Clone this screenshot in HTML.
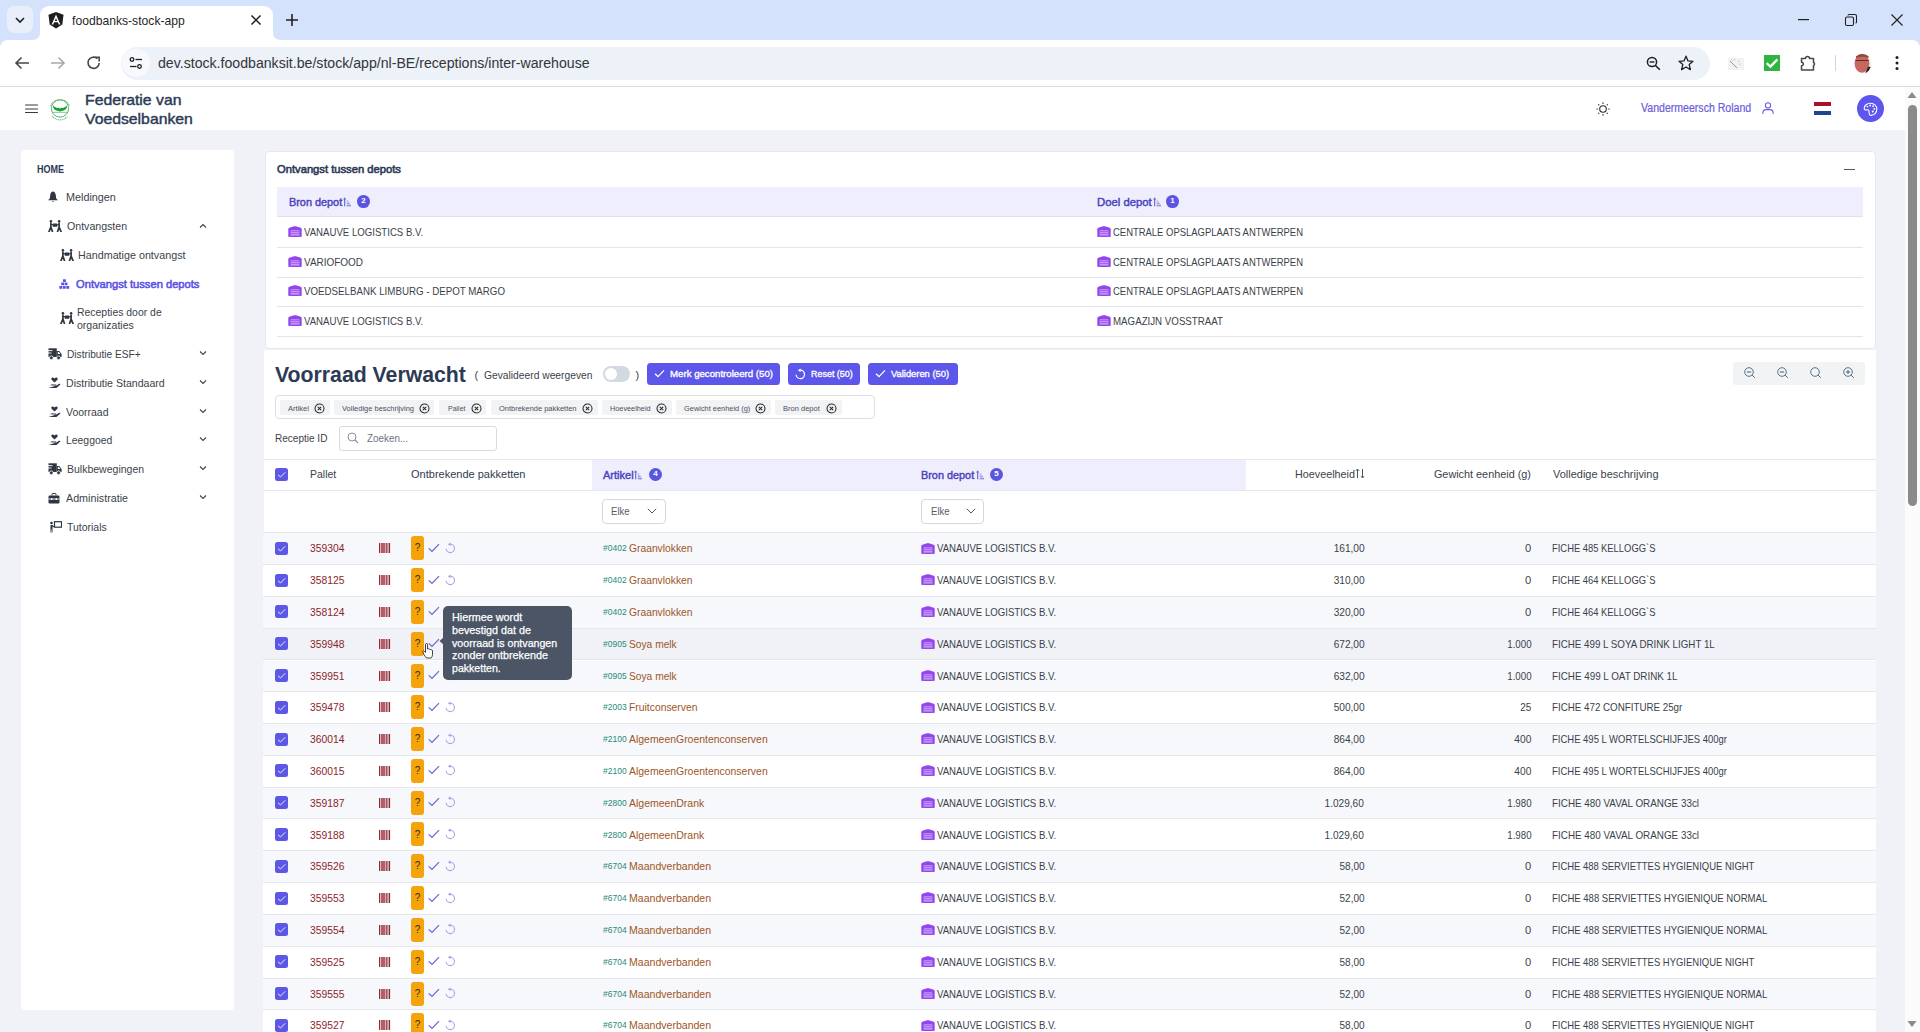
<!DOCTYPE html><html><head><meta charset="utf-8"><style>
*{box-sizing:border-box;margin:0;padding:0}
html,body{width:1920px;height:1032px;overflow:hidden;background:#f1f2f7;font-family:"Liberation Sans",sans-serif;color:#3b3f4a}
.a{position:absolute;white-space:nowrap}
svg{display:block}
</style></head><body><div class="a" style="left:0px;top:0px;width:1920px;height:48px;background:#d5e2fb;"></div><div class="a" style="left:7px;top:6px;width:26px;height:27px;background:#e8effb;border-radius:7px;"></div><svg class="a" style="left:14px;top:15px" width="12" height="10" viewBox="0 0 12 10"><path d="M2 3 L6 7 L10 3" fill="none" stroke="#1f1f1f" stroke-width="1.6"/></svg><div class="a" style="left:40px;top:6px;width:233px;height:40px;background:#fff;border-radius:9px 9px 0 0;"></div><svg class="a" style="left:32px;top:32px" width="8" height="8"><path d="M0 8 Q8 8 8 0 L8 8Z" fill="#fff"/></svg><svg class="a" style="left:273px;top:32px" width="8" height="8"><path d="M8 8 Q0 8 0 0 L0 8Z" fill="#fff"/></svg><svg class="a" style="left:48px;top:12px" width="16" height="17" viewBox="0 0 16 17"><path d="M8 0 L15.5 2.7 L14.3 12.6 L8 16.5 L1.7 12.6 L0.5 2.7Z" fill="#1f1f1f"/><path d="M8 2.6 L3.6 12.4 H5.2 L6.1 10.2 H9.9 L10.8 12.4 H12.4Z M8 6.2 L9.3 9 H6.7Z" fill="#fff"/></svg><div class="a" style="left:72.2px;top:13.20px;height:16px;line-height:16px;font-size:13px;color:#1f1f1f;font-weight:400;transform:scaleX(0.9347);transform-origin:left center;">foodbanks-stock-app</div><svg class="a" style="left:250px;top:14px" width="12" height="12" viewBox="0 0 12 12"><path d="M1.5 1.5 L10.5 10.5 M10.5 1.5 L1.5 10.5" stroke="#1f1f1f" stroke-width="1.5"/></svg><svg class="a" style="left:285px;top:13px" width="14" height="14" viewBox="0 0 14 14"><path d="M7 1 V13 M1 7 H13" stroke="#1f1f1f" stroke-width="1.6"/></svg><svg class="a" style="left:1798px;top:19px" width="12" height="2"><rect width="11" height="1.2" fill="#1f1f1f"/></svg><svg class="a" style="left:1844px;top:13px" width="14" height="14" viewBox="0 0 14 14"><rect x="1.5" y="4" width="8" height="8.5" rx="1.5" fill="none" stroke="#1f1f1f" stroke-width="1.1"/><path d="M4 2.5 Q4 1.5 5 1.5 H11 Q12.5 1.5 12.5 3 V9 Q12.5 10 11.5 10" fill="none" stroke="#1f1f1f" stroke-width="1.1"/></svg><svg class="a" style="left:1890px;top:13px" width="14" height="14" viewBox="0 0 14 14"><path d="M1.5 1.5 L12.5 12.5 M12.5 1.5 L1.5 12.5" stroke="#1f1f1f" stroke-width="1.1"/></svg><div class="a" style="left:0px;top:40px;width:1920px;height:46px;background:#fff;border-radius:8px 8px 0 0;"></div><div class="a" style="left:0px;top:86px;width:1920px;height:1px;background:#dadce0;"></div><svg class="a" style="left:14px;top:56px" width="16" height="14" viewBox="0 0 16 14"><path d="M15 7 H2 M7.5 1.5 L2 7 L7.5 12.5" fill="none" stroke="#474747" stroke-width="1.6"/></svg><svg class="a" style="left:50px;top:56px" width="16" height="14" viewBox="0 0 16 14"><path d="M1 7 H14 M8.5 1.5 L14 7 L8.5 12.5" fill="none" stroke="#a8a8a8" stroke-width="1.6"/></svg><svg class="a" style="left:86px;top:55px" width="16" height="16" viewBox="0 0 16 16"><path d="M13.2 8 A5.6 5.6 0 1 1 11.4 3.6" fill="none" stroke="#474747" stroke-width="1.6"/><path d="M9 2.2 H13.2 V6.4" fill="none" stroke="#474747" stroke-width="1.6"/></svg><div class="a" style="left:120.5px;top:46.5px;width:1589px;height:33px;background:#edf1f8;border-radius:16.5px;"></div><div class="a" style="left:122px;top:49px;width:28px;height:28px;background:#f8f9fc;border-radius:14px;"></div><svg class="a" style="left:129px;top:56px" width="14" height="14" viewBox="0 0 14 14"><circle cx="3" cy="3.5" r="1.8" fill="none" stroke="#1f1f1f" stroke-width="1.3"/><path d="M6.5 3.5 H13" stroke="#1f1f1f" stroke-width="1.3"/><circle cx="10.5" cy="10.5" r="1.8" fill="none" stroke="#1f1f1f" stroke-width="1.3"/><path d="M1 10.5 H7.5" stroke="#1f1f1f" stroke-width="1.3"/></svg><div class="a" style="left:157.8px;top:54.00px;height:18px;line-height:18px;font-size:14px;color:#333639;font-weight:400;transform:scaleX(1.0090);transform-origin:left center;">dev.stock.foodbanksit.be/stock/app/nl-BE/receptions/inter-warehouse</div><svg class="a" style="left:1646px;top:56px" width="15" height="15" viewBox="0 0 15 15"><circle cx="6" cy="6" r="4.6" fill="none" stroke="#1f1f1f" stroke-width="1.5"/><path d="M9.5 9.5 L13.8 13.8" stroke="#1f1f1f" stroke-width="1.6"/><path d="M3.6 6 H8.4" stroke="#1f1f1f" stroke-width="1.4"/></svg><svg class="a" style="left:1678px;top:55px" width="16" height="16" viewBox="0 0 16 16"><path d="M8 1.2 L10 5.9 L15 6.3 L11.2 9.6 L12.4 14.6 L8 12 L3.6 14.6 L4.8 9.6 L1 6.3 L6 5.9Z" fill="none" stroke="#1f1f1f" stroke-width="1.3" stroke-linejoin="round"/></svg><div class="a" style="left:1728px;top:57.5px;width:16px;height:12px;background:#f1f2f4;"></div><svg class="a" style="left:1728px;top:57px" width="16" height="13" viewBox="0 0 16 13"><path d="M2 4 L9 11" stroke="#8a8a8a" stroke-width="0.9"/><path d="M3 2 L5 4 M7 1.5 L6.5 3.5 M12 3 L10 5 M13 7 L11 7" stroke="#c4c4c4" stroke-width="0.8"/></svg><div class="a" style="left:1764px;top:55px;width:16px;height:16px;background:#2fb53f;"></div><svg class="a" style="left:1764px;top:55px" width="16" height="16" viewBox="0 0 16 16"><path d="M2.6 8.2 L6.4 11.6 L13.4 4.4" fill="none" stroke="#fff" stroke-width="2.3"/></svg><svg class="a" style="left:1800px;top:53.5px" width="18" height="18" viewBox="0 0 18 18"><path d="M1.5 4.5 H5.5 A2 2 0 0 1 9.5 4.5 H13.5 V8.5 A1.6 1.6 0 0 1 13.5 11.5 V16 H1.5 V11.8 A1.8 1.8 0 0 0 1.5 8.2Z" fill="none" stroke="#474747" stroke-width="1.5" stroke-linejoin="round"/></svg><div class="a" style="left:1834.5px;top:55px;width:1.2px;height:15.5px;background:#c8d7f5;"></div><svg class="a" style="left:1853px;top:52.5px" width="19" height="21" viewBox="0 0 19 21"><defs><clipPath id="av"><ellipse cx="9.5" cy="10.5" rx="8.8" ry="10.2"/></clipPath></defs><g clip-path="url(#av)"><rect width="19" height="21" fill="#f4f0ee"/><ellipse cx="9" cy="10.5" rx="7.4" ry="9.2" fill="#c8675f"/><path d="M15 14 Q17 13 19 15 V21 H12Z" fill="#222"/><path d="M2.5 7.5 H15.5" stroke="#5a2a25" stroke-width="1"/><path d="M3 3 Q9 -1 15.5 3 L15.5 5 Q9 2.5 3 5Z" fill="#8a4a40"/></g></svg><svg class="a" style="left:1894px;top:55px" width="6" height="16" viewBox="0 0 6 16"><circle cx="3" cy="2.5" r="1.5" fill="#1f1f1f"/><circle cx="3" cy="8" r="1.5" fill="#1f1f1f"/><circle cx="3" cy="13.5" r="1.5" fill="#1f1f1f"/></svg><div class="a" style="left:0px;top:87px;width:1905px;height:43px;background:#fff;"></div><div class="a" style="left:0px;top:130px;width:1905px;height:902px;background:#f1f2f7;"></div><svg class="a" style="left:25px;top:103.5px" width="13" height="10" viewBox="0 0 13 10"><path d="M0.5 1 H12.5 M0.5 5 H12.5 M0.5 8.5 H12.5" stroke="#353b48" stroke-width="1.05" stroke-linecap="round"/></svg><svg class="a" style="left:46px;top:95px" width="28" height="28" viewBox="0 0 28 28"><path d="M4.5 11 A10.2 10.2 0 0 1 23.5 11" fill="none" stroke="#5fae74" stroke-width="1.1" stroke-dasharray="1.2 0.6" opacity="0.8"/><path d="M6 21 A10.2 10.2 0 0 0 22 21" fill="none" stroke="#5fae74" stroke-width="1.1" stroke-dasharray="1.2 0.6" opacity="0.8"/><circle cx="14" cy="13.5" r="8.6" fill="none" stroke="#3fae5c" stroke-width="0.9"/><path d="M7.3 10.3 Q8 12.2 10.5 12.8 Q12.5 13.4 13.2 12.6 L14 14.2 L14.8 12.6 Q15.5 13.4 17.5 12.8 Q20 12.2 20.7 10.3 L20.8 12.5 Q20 15 17.5 15.4 L14 16.6 L10.5 15.4 Q8 15 7.2 12.5Z" fill="#16a032"/><path d="M7 17.3 H21" stroke="#6fb083" stroke-width="0.8"/></svg><div class="a" style="left:84.5px;top:90.60px;height:18px;line-height:18px;font-size:14.5px;color:#2c3a55;font-weight:400;transform:scaleX(1.0877);transform-origin:left center;-webkit-text-stroke:0.42px #2c3a55;">Federatie van</div><div class="a" style="left:85px;top:109.50px;height:18px;line-height:18px;font-size:14.5px;color:#2c3a55;font-weight:400;transform:scaleX(1.0874);transform-origin:left center;-webkit-text-stroke:0.42px #2c3a55;">Voedselbanken</div><svg class="a" style="left:1595.5px;top:101.5px" width="14" height="14" viewBox="0 0 14 14"><circle cx="7" cy="7" r="3.3" fill="none" stroke="#2d2d2d" stroke-width="1.1"/><g stroke="#2d2d2d" stroke-width="1.1" stroke-linecap="round"><path d="M7 0.8 V1.4"/><path d="M7 12.6 V13.2"/><path d="M0.8 7 H1.4"/><path d="M12.6 7 H13.2"/><path d="M2.6 2.6 L2.9 2.9"/><path d="M11.1 11.1 L11.4 11.4"/><path d="M11.4 2.6 L11.1 2.9"/><path d="M2.9 11.1 L2.6 11.4"/></g></svg><div class="a" style="left:1641.3px;top:100.50px;height:15px;line-height:15px;font-size:12px;color:#6a5dd9;font-weight:400;transform:scaleX(0.8805);transform-origin:left center;-webkit-text-stroke:0.2px #6a5dd9;">Vandermeersch Roland</div><svg class="a" style="left:1762px;top:101.5px" width="12" height="12" viewBox="0 0 12 12"><circle cx="6" cy="3.4" r="2.6" fill="none" stroke="#6b5fdc" stroke-width="1.1"/><path d="M0.8 11.4 Q0.8 7.6 4 7.6 H8 Q11.2 7.6 11.2 11.4" fill="none" stroke="#6b5fdc" stroke-width="1.1" stroke-linecap="round"/></svg><div class="a" style="left:1814px;top:102px;width:17px;height:4px;background:#a8102c;"></div><div class="a" style="left:1814px;top:106px;width:17px;height:4.6px;background:#fff;"></div><div class="a" style="left:1814px;top:110.6px;width:17px;height:4.2px;background:#21468b;"></div><div class="a" style="left:1857px;top:95px;width:27px;height:27px;background:#5d55ee;border-radius:50%;"></div><svg class="a" style="left:1863px;top:101.5px" width="15" height="15" viewBox="0 0 15 15"><path d="M7.5 1.2 C4 1.2 1.2 3.6 1.2 6.4 C1.2 7.8 2.4 8.2 3.4 7.9 C4.8 7.5 6 8.2 6 9.6 C6 10.4 6 11 6.3 11.8 C6.6 13 7.3 13.6 8 13.4 C11.5 12.8 13.8 10.3 13.8 7 C13.8 3.8 11 1.2 7.5 1.2Z" fill="none" stroke="#fff" stroke-width="1.1"/><circle cx="4.4" cy="4.6" r="0.9" fill="#fff"/><circle cx="7.2" cy="3.5" r="0.9" fill="#fff"/><circle cx="10" cy="4.2" r="0.9" fill="#fff"/><circle cx="11.3" cy="6.9" r="0.9" fill="#fff"/><circle cx="9.8" cy="9.6" r="1" fill="#fff"/></svg><div class="a" style="left:1905px;top:87px;width:15px;height:945px;background:#fbfbfb;"></div><svg class="a" style="left:1907px;top:91px" width="10" height="8"><path d="M5 1 L9.5 7 H0.5Z" fill="#8a8a8a"/></svg><div class="a" style="left:1908px;top:105px;width:9px;height:401px;background:#8a8a8a;border-radius:5px;"></div><svg class="a" style="left:1907px;top:1020px" width="10" height="8"><path d="M5 7 L9.5 1 H0.5Z" fill="#8a8a8a"/></svg><div class="a" style="left:21px;top:150px;width:213px;height:860px;background:#fff;border-radius:4px;"></div><div class="a" style="left:37.4px;top:163.50px;height:12px;line-height:12px;font-size:10px;color:#2c3a55;font-weight:700;transform:scaleX(0.9033);transform-origin:left center;">HOME</div><div class="a" style="left:47px;top:191.0px"><svg width="12" height="12" viewBox="0 0 12 12"><path d="M6 0.6 C4.6 0.6 3.4 2.2 3.2 4.2 L2.8 7.4 L1 9.2 H11 L9.2 7.4 L8.8 4.2 C8.6 2.2 7.4 0.6 6 0.6Z" fill="#2f3542"/><path d="M4.8 10 Q6 11.6 7.2 10Z" fill="#2f3542"/></svg></div><div class="a" style="left:65.5px;top:190.20px;height:14px;line-height:14px;font-size:11px;color:#3b3f4a;font-weight:400;transform:scaleX(0.9811);transform-origin:left center;">Meldingen</div><div class="a" style="left:48px;top:219.8px"><svg width="14" height="12" viewBox="0 0 14 12"><circle cx="2.9" cy="1.3" r="1.25" fill="#2f3542"/><circle cx="11.1" cy="1.3" r="1.25" fill="#2f3542"/><path d="M2.9 3 V7.2 M2.9 7 L1 11.6 M2.9 7 L4.4 11.6 M11.1 3 V7.2 M11.1 7 L13 11.6 M11.1 7 L9.6 11.6" stroke="#2f3542" stroke-width="1.7" fill="none" stroke-linecap="round"/><path d="M3 4.2 L5 5 M11 4.2 L9 5" stroke="#2f3542" stroke-width="1.2"/><rect x="4.7" y="3.6" width="4.6" height="3.2" rx="0.6" fill="#2f3542"/></svg></div><div class="a" style="left:66.9px;top:219.20px;height:14px;line-height:14px;font-size:11px;color:#3b3f4a;font-weight:400;transform:scaleX(0.9635);transform-origin:left center;">Ontvangsten</div><svg class="a" style="left:198.8px;top:223px" width="8" height="6" viewBox="0 0 8 6"><path d="M1 4.5 L4 1.5 L7 4.5" fill="none" stroke="#3d4450" stroke-width="1.1"/></svg><div class="a" style="left:60px;top:249.0px"><svg width="14" height="12" viewBox="0 0 14 12"><circle cx="2.9" cy="1.3" r="1.25" fill="#2f3542"/><circle cx="11.1" cy="1.3" r="1.25" fill="#2f3542"/><path d="M2.9 3 V7.2 M2.9 7 L1 11.6 M2.9 7 L4.4 11.6 M11.1 3 V7.2 M11.1 7 L13 11.6 M11.1 7 L9.6 11.6" stroke="#2f3542" stroke-width="1.7" fill="none" stroke-linecap="round"/><path d="M3 4.2 L5 5 M11 4.2 L9 5" stroke="#2f3542" stroke-width="1.2"/><rect x="4.7" y="3.6" width="4.6" height="3.2" rx="0.6" fill="#2f3542"/></svg></div><div class="a" style="left:77.5px;top:248.30px;height:14px;line-height:14px;font-size:11px;color:#3b3f4a;font-weight:400;transform:scaleX(0.9766);transform-origin:left center;">Handmatige ontvangst</div><div class="a" style="left:58.8px;top:278.5px"><svg width="11" height="11" viewBox="0 0 11 11"><g fill="#5a52e5"><rect x="4" y="0.2" width="2.9" height="2.8" rx="0.4"/><rect x="2.2" y="3.4" width="2.9" height="2.8" rx="0.4"/><rect x="5.6" y="3.4" width="2.9" height="2.8" rx="0.4"/><rect x="0.3" y="6.9" width="2.9" height="2.9" rx="0.4"/><rect x="3.8" y="6.9" width="2.9" height="2.9" rx="0.4"/><rect x="7.3" y="6.9" width="2.9" height="2.9" rx="0.4"/></g></svg></div><div class="a" style="left:76px;top:277.40px;height:14px;line-height:14px;font-size:11px;color:#5a52e5;font-weight:400;transform:scaleX(1.0144);transform-origin:left center;-webkit-text-stroke:0.55px #5a52e5;">Ontvangst tussen depots</div><div class="a" style="left:60px;top:312.0px"><svg width="14" height="12" viewBox="0 0 14 12"><circle cx="2.9" cy="1.3" r="1.25" fill="#2f3542"/><circle cx="11.1" cy="1.3" r="1.25" fill="#2f3542"/><path d="M2.9 3 V7.2 M2.9 7 L1 11.6 M2.9 7 L4.4 11.6 M11.1 3 V7.2 M11.1 7 L13 11.6 M11.1 7 L9.6 11.6" stroke="#2f3542" stroke-width="1.7" fill="none" stroke-linecap="round"/><path d="M3 4.2 L5 5 M11 4.2 L9 5" stroke="#2f3542" stroke-width="1.2"/><rect x="4.7" y="3.6" width="4.6" height="3.2" rx="0.6" fill="#2f3542"/></svg></div><div class="a" style="left:76.5px;top:305.10px;height:14px;line-height:14px;font-size:11px;color:#3b3f4a;font-weight:400;transform:scaleX(0.9487);transform-origin:left center;">Recepties door de</div><div class="a" style="left:76.5px;top:318.00px;height:14px;line-height:14px;font-size:11px;color:#3b3f4a;font-weight:400;transform:scaleX(0.9576);transform-origin:left center;">organizaties</div><div class="a" style="left:47.8px;top:347.5px"><svg width="14" height="12" viewBox="0 0 14 12"><path d="M0.5 0.3 H8.8 V9 H0.5Z" fill="#2f3542"/><path d="M8.8 3 H11.3 L13.6 6 V9 H8.8Z" fill="#2f3542"/><path d="M9.8 4 H11 L12.4 6 H9.8Z" fill="#fff"/><circle cx="3.3" cy="9.8" r="1.9" fill="#2f3542" stroke="#fff" stroke-width="0.8"/><circle cx="10.6" cy="9.8" r="1.9" fill="#2f3542" stroke="#fff" stroke-width="0.8"/><path d="M0 2.6 H4.5 M0 5 H3.5" stroke="#fff" stroke-width="0.9"/></svg></div><div class="a" style="left:67.3px;top:346.80px;height:14px;line-height:14px;font-size:11px;color:#3b3f4a;font-weight:400;transform:scaleX(0.9238);transform-origin:left center;">Distributie ESF+</div><svg class="a" style="left:198.8px;top:350px" width="8" height="6" viewBox="0 0 8 6"><path d="M1 1.5 L4 4.5 L7 1.5" fill="none" stroke="#3d4450" stroke-width="1.1"/></svg><div class="a" style="left:48px;top:377.0px"><svg width="13" height="12" viewBox="0 0 13 12"><path d="M6.5 5.5 L3.8 3 Q2.8 1.8 3.8 0.8 Q5 -0.2 6.5 1.5 Q8 -0.2 9.2 0.8 Q10.2 1.8 9.2 3Z" fill="#2f3542"/><path d="M0.5 8 H2.5 Q4 7 5.5 7.5 H8 Q8.8 7.8 8 8.6 H5.5 M8.5 8.4 L11 6.8 Q12.5 6.5 12.3 7.6 L9 10.5 Q8.5 11 7.5 11 H0.5Z" fill="#2f3542"/></svg></div><div class="a" style="left:65.5px;top:376.00px;height:14px;line-height:14px;font-size:11px;color:#3b3f4a;font-weight:400;transform:scaleX(0.9608);transform-origin:left center;">Distributie Standaard</div><svg class="a" style="left:198.8px;top:379px" width="8" height="6" viewBox="0 0 8 6"><path d="M1 1.5 L4 4.5 L7 1.5" fill="none" stroke="#3d4450" stroke-width="1.1"/></svg><div class="a" style="left:48px;top:406.0px"><svg width="13" height="12" viewBox="0 0 13 12"><path d="M6.5 5.5 L3.8 3 Q2.8 1.8 3.8 0.8 Q5 -0.2 6.5 1.5 Q8 -0.2 9.2 0.8 Q10.2 1.8 9.2 3Z" fill="#2f3542"/><path d="M0.5 8 H2.5 Q4 7 5.5 7.5 H8 Q8.8 7.8 8 8.6 H5.5 M8.5 8.4 L11 6.8 Q12.5 6.5 12.3 7.6 L9 10.5 Q8.5 11 7.5 11 H0.5Z" fill="#2f3542"/></svg></div><div class="a" style="left:65.5px;top:405.00px;height:14px;line-height:14px;font-size:11px;color:#3b3f4a;font-weight:400;transform:scaleX(0.9519);transform-origin:left center;">Voorraad</div><svg class="a" style="left:198.8px;top:408px" width="8" height="6" viewBox="0 0 8 6"><path d="M1 1.5 L4 4.5 L7 1.5" fill="none" stroke="#3d4450" stroke-width="1.1"/></svg><div class="a" style="left:48px;top:434.0px"><svg width="13" height="12" viewBox="0 0 13 12"><path d="M6.5 5.5 L3.8 3 Q2.8 1.8 3.8 0.8 Q5 -0.2 6.5 1.5 Q8 -0.2 9.2 0.8 Q10.2 1.8 9.2 3Z" fill="#2f3542"/><path d="M0.5 8 H2.5 Q4 7 5.5 7.5 H8 Q8.8 7.8 8 8.6 H5.5 M8.5 8.4 L11 6.8 Q12.5 6.5 12.3 7.6 L9 10.5 Q8.5 11 7.5 11 H0.5Z" fill="#2f3542"/></svg></div><div class="a" style="left:65.5px;top:433.30px;height:14px;line-height:14px;font-size:11px;color:#3b3f4a;font-weight:400;transform:scaleX(0.9460);transform-origin:left center;">Leeggoed</div><svg class="a" style="left:198.8px;top:436px" width="8" height="6" viewBox="0 0 8 6"><path d="M1 1.5 L4 4.5 L7 1.5" fill="none" stroke="#3d4450" stroke-width="1.1"/></svg><div class="a" style="left:47.8px;top:462.8px"><svg width="14" height="12" viewBox="0 0 14 12"><path d="M0.5 0.3 H8.8 V9 H0.5Z" fill="#2f3542"/><path d="M8.8 3 H11.3 L13.6 6 V9 H8.8Z" fill="#2f3542"/><path d="M9.8 4 H11 L12.4 6 H9.8Z" fill="#fff"/><circle cx="3.3" cy="9.8" r="1.9" fill="#2f3542" stroke="#fff" stroke-width="0.8"/><circle cx="10.6" cy="9.8" r="1.9" fill="#2f3542" stroke="#fff" stroke-width="0.8"/><path d="M0 2.6 H4.5 M0 5 H3.5" stroke="#fff" stroke-width="0.9"/></svg></div><div class="a" style="left:67.3px;top:462.30px;height:14px;line-height:14px;font-size:11px;color:#3b3f4a;font-weight:400;transform:scaleX(0.9550);transform-origin:left center;">Bulkbewegingen</div><svg class="a" style="left:198.8px;top:465px" width="8" height="6" viewBox="0 0 8 6"><path d="M1 1.5 L4 4.5 L7 1.5" fill="none" stroke="#3d4450" stroke-width="1.1"/></svg><div class="a" style="left:48px;top:492.5px"><svg width="12" height="11" viewBox="0 0 12 11"><path d="M4 2.5 V1.2 Q4 0.5 4.7 0.5 H7.3 Q8 0.5 8 1.2 V2.5" fill="none" stroke="#2f3542" stroke-width="1"/><rect x="0.5" y="2.5" width="11" height="8" rx="1.2" fill="#2f3542"/><path d="M0.5 6 H11.5" stroke="#fff" stroke-width="0.9"/><rect x="3" y="5.2" width="1.4" height="1.8" fill="#fff"/><rect x="7.6" y="5.2" width="1.4" height="1.8" fill="#fff"/></svg></div><div class="a" style="left:65.5px;top:490.80px;height:14px;line-height:14px;font-size:11px;color:#3b3f4a;font-weight:400;transform:scaleX(0.9751);transform-origin:left center;">Administratie</div><svg class="a" style="left:198.8px;top:494px" width="8" height="6" viewBox="0 0 8 6"><path d="M1 1.5 L4 4.5 L7 1.5" fill="none" stroke="#3d4450" stroke-width="1.1"/></svg><div class="a" style="left:49px;top:521.0px"><svg width="13" height="12" viewBox="0 0 13 12"><rect x="5.5" y="0.7" width="7" height="5.5" fill="none" stroke="#2f3542" stroke-width="1.2"/><circle cx="2.5" cy="2" r="1.3" fill="#2f3542"/><path d="M1.5 4 H3.5 L5.5 5.5 L4.8 6.3 L3.5 5.6 V11.5 H2.8 V8.5 H2.3 V11.5 H1.5Z" fill="#2f3542"/></svg></div><div class="a" style="left:67.3px;top:519.70px;height:14px;line-height:14px;font-size:11px;color:#3b3f4a;font-weight:400;transform:scaleX(0.9504);transform-origin:left center;">Tutorials</div><div class="a" style="left:264.5px;top:151px;width:1611.5px;height:198px;background:#fff;border:1px solid #e6e8ee;border-radius:4px;"></div><div class="a" style="left:277.4px;top:162.20px;height:14px;line-height:14px;font-size:11.5px;color:#2c3a55;font-weight:400;transform:scaleX(0.9740);transform-origin:left center;-webkit-text-stroke:0.6px #2c3a55;">Ontvangst tussen depots</div><div class="a" style="left:1843.5px;top:168.5px;width:11px;height:1.2px;background:#5a5a5a;"></div><div class="a" style="left:277px;top:187px;width:1586px;height:30px;background:#eeeefc;"></div><div class="a" style="left:277px;top:216px;width:1586px;height:1px;background:#e1e2ea;"></div><div class="a" style="left:288.6px;top:195.00px;height:14px;line-height:14px;font-size:11px;color:#4a3fc0;font-weight:400;transform:scaleX(0.9882);transform-origin:left center;-webkit-text-stroke:0.42px #4a3fc0;">Bron depot</div><svg class="a" style="left:343px;top:196.5px" width="9" height="10" viewBox="0 0 9 10"><rect x="1.05" y="1.6" width="1.2" height="7.7" fill="#6f6ad0"/><path d="M0 2.4 L1.65 0.3 L3.3 2.4Z" fill="#6f6ad0"/><rect x="3.7" y="3.4" width="1.6" height="1.4" fill="#aaa6df"/><rect x="3.7" y="5.5" width="2.9" height="1.5" fill="#a19dda"/><rect x="3.7" y="7.6" width="4.3" height="1.8" fill="#9894d6"/></svg><div class="a" style="left:357.20000000000005px;top:194.79999999999998px;width:12.8px;height:12.8px;border-radius:50%;background:#5b55e0;color:#fff;font-size:8px;font-weight:700;line-height:12.8px;text-align:center">2</div><div class="a" style="left:1097.2px;top:195.00px;height:14px;line-height:14px;font-size:11px;color:#4a3fc0;font-weight:400;transform:scaleX(1.0293);transform-origin:left center;-webkit-text-stroke:0.42px #4a3fc0;">Doel depot</div><svg class="a" style="left:1152.8px;top:196.5px" width="9" height="10" viewBox="0 0 9 10"><rect x="1.05" y="1.6" width="1.2" height="7.7" fill="#6f6ad0"/><path d="M0 2.4 L1.65 0.3 L3.3 2.4Z" fill="#6f6ad0"/><rect x="3.7" y="3.4" width="1.6" height="1.4" fill="#aaa6df"/><rect x="3.7" y="5.5" width="2.9" height="1.5" fill="#a19dda"/><rect x="3.7" y="7.6" width="4.3" height="1.8" fill="#9894d6"/></svg><div class="a" style="left:1166.1px;top:195.1px;width:12.8px;height:12.8px;border-radius:50%;background:#5b55e0;color:#fff;font-size:8px;font-weight:700;line-height:12.8px;text-align:center">1</div><div class="a" style="left:288px;top:226.0px"><svg width="14" height="11" viewBox="0 0 14 11"><path d="M0.3 3.2 Q0.3 2.2 1.3 1.8 L6 0.3 Q7 0 8 0.3 L12.7 1.8 Q13.7 2.2 13.7 3.2 V10.2 Q13.7 11 12.9 11 H1.1 Q0.3 11 0.3 10.2Z" fill="#9446ee"/><rect x="2.8" y="4.6" width="8.4" height="6.4" fill="#f1e8fd"/><rect x="2.8" y="5.2" width="8.4" height="1.3" fill="#9446ee"/><rect x="2.8" y="7.2" width="8.4" height="1.3" fill="#9446ee"/><rect x="2.8" y="9.3" width="8.4" height="1.7" fill="#9446ee"/></svg></div><div class="a" style="left:304px;top:225.00px;height:14px;line-height:14px;font-size:11px;color:#3b3f4a;font-weight:400;transform:scaleX(0.8747);transform-origin:left center;">VANAUVE LOGISTICS B.V.</div><div class="a" style="left:1097px;top:226.0px"><svg width="14" height="11" viewBox="0 0 14 11"><path d="M0.3 3.2 Q0.3 2.2 1.3 1.8 L6 0.3 Q7 0 8 0.3 L12.7 1.8 Q13.7 2.2 13.7 3.2 V10.2 Q13.7 11 12.9 11 H1.1 Q0.3 11 0.3 10.2Z" fill="#9446ee"/><rect x="2.8" y="4.6" width="8.4" height="6.4" fill="#f1e8fd"/><rect x="2.8" y="5.2" width="8.4" height="1.3" fill="#9446ee"/><rect x="2.8" y="7.2" width="8.4" height="1.3" fill="#9446ee"/><rect x="2.8" y="9.3" width="8.4" height="1.7" fill="#9446ee"/></svg></div><div class="a" style="left:1113.4px;top:225.00px;height:14px;line-height:14px;font-size:11px;color:#3b3f4a;font-weight:400;transform:scaleX(0.8594);transform-origin:left center;">CENTRALE OPSLAGPLAATS ANTWERPEN</div><div class="a" style="left:277px;top:247px;width:1586px;height:1px;background:#e4e5ea;"></div><div class="a" style="left:288px;top:255.67000000000002px"><svg width="14" height="11" viewBox="0 0 14 11"><path d="M0.3 3.2 Q0.3 2.2 1.3 1.8 L6 0.3 Q7 0 8 0.3 L12.7 1.8 Q13.7 2.2 13.7 3.2 V10.2 Q13.7 11 12.9 11 H1.1 Q0.3 11 0.3 10.2Z" fill="#9446ee"/><rect x="2.8" y="4.6" width="8.4" height="6.4" fill="#f1e8fd"/><rect x="2.8" y="5.2" width="8.4" height="1.3" fill="#9446ee"/><rect x="2.8" y="7.2" width="8.4" height="1.3" fill="#9446ee"/><rect x="2.8" y="9.3" width="8.4" height="1.7" fill="#9446ee"/></svg></div><div class="a" style="left:304px;top:254.67px;height:14px;line-height:14px;font-size:11px;color:#3b3f4a;font-weight:400;transform:scaleX(0.9051);transform-origin:left center;">VARIOFOOD</div><div class="a" style="left:1097px;top:255.67000000000002px"><svg width="14" height="11" viewBox="0 0 14 11"><path d="M0.3 3.2 Q0.3 2.2 1.3 1.8 L6 0.3 Q7 0 8 0.3 L12.7 1.8 Q13.7 2.2 13.7 3.2 V10.2 Q13.7 11 12.9 11 H1.1 Q0.3 11 0.3 10.2Z" fill="#9446ee"/><rect x="2.8" y="4.6" width="8.4" height="6.4" fill="#f1e8fd"/><rect x="2.8" y="5.2" width="8.4" height="1.3" fill="#9446ee"/><rect x="2.8" y="7.2" width="8.4" height="1.3" fill="#9446ee"/><rect x="2.8" y="9.3" width="8.4" height="1.7" fill="#9446ee"/></svg></div><div class="a" style="left:1113.4px;top:254.67px;height:14px;line-height:14px;font-size:11px;color:#3b3f4a;font-weight:400;transform:scaleX(0.8594);transform-origin:left center;">CENTRALE OPSLAGPLAATS ANTWERPEN</div><div class="a" style="left:277px;top:277px;width:1586px;height:1px;background:#e4e5ea;"></div><div class="a" style="left:288px;top:285.34000000000003px"><svg width="14" height="11" viewBox="0 0 14 11"><path d="M0.3 3.2 Q0.3 2.2 1.3 1.8 L6 0.3 Q7 0 8 0.3 L12.7 1.8 Q13.7 2.2 13.7 3.2 V10.2 Q13.7 11 12.9 11 H1.1 Q0.3 11 0.3 10.2Z" fill="#9446ee"/><rect x="2.8" y="4.6" width="8.4" height="6.4" fill="#f1e8fd"/><rect x="2.8" y="5.2" width="8.4" height="1.3" fill="#9446ee"/><rect x="2.8" y="7.2" width="8.4" height="1.3" fill="#9446ee"/><rect x="2.8" y="9.3" width="8.4" height="1.7" fill="#9446ee"/></svg></div><div class="a" style="left:304px;top:284.34px;height:14px;line-height:14px;font-size:11px;color:#3b3f4a;font-weight:400;transform:scaleX(0.8848);transform-origin:left center;">VOEDSELBANK LIMBURG - DEPOT MARGO</div><div class="a" style="left:1097px;top:285.34000000000003px"><svg width="14" height="11" viewBox="0 0 14 11"><path d="M0.3 3.2 Q0.3 2.2 1.3 1.8 L6 0.3 Q7 0 8 0.3 L12.7 1.8 Q13.7 2.2 13.7 3.2 V10.2 Q13.7 11 12.9 11 H1.1 Q0.3 11 0.3 10.2Z" fill="#9446ee"/><rect x="2.8" y="4.6" width="8.4" height="6.4" fill="#f1e8fd"/><rect x="2.8" y="5.2" width="8.4" height="1.3" fill="#9446ee"/><rect x="2.8" y="7.2" width="8.4" height="1.3" fill="#9446ee"/><rect x="2.8" y="9.3" width="8.4" height="1.7" fill="#9446ee"/></svg></div><div class="a" style="left:1113.4px;top:284.34px;height:14px;line-height:14px;font-size:11px;color:#3b3f4a;font-weight:400;transform:scaleX(0.8594);transform-origin:left center;">CENTRALE OPSLAGPLAATS ANTWERPEN</div><div class="a" style="left:277px;top:306px;width:1586px;height:1px;background:#e4e5ea;"></div><div class="a" style="left:288px;top:315.01px"><svg width="14" height="11" viewBox="0 0 14 11"><path d="M0.3 3.2 Q0.3 2.2 1.3 1.8 L6 0.3 Q7 0 8 0.3 L12.7 1.8 Q13.7 2.2 13.7 3.2 V10.2 Q13.7 11 12.9 11 H1.1 Q0.3 11 0.3 10.2Z" fill="#9446ee"/><rect x="2.8" y="4.6" width="8.4" height="6.4" fill="#f1e8fd"/><rect x="2.8" y="5.2" width="8.4" height="1.3" fill="#9446ee"/><rect x="2.8" y="7.2" width="8.4" height="1.3" fill="#9446ee"/><rect x="2.8" y="9.3" width="8.4" height="1.7" fill="#9446ee"/></svg></div><div class="a" style="left:304px;top:314.01px;height:14px;line-height:14px;font-size:11px;color:#3b3f4a;font-weight:400;transform:scaleX(0.8747);transform-origin:left center;">VANAUVE LOGISTICS B.V.</div><div class="a" style="left:1097px;top:315.01px"><svg width="14" height="11" viewBox="0 0 14 11"><path d="M0.3 3.2 Q0.3 2.2 1.3 1.8 L6 0.3 Q7 0 8 0.3 L12.7 1.8 Q13.7 2.2 13.7 3.2 V10.2 Q13.7 11 12.9 11 H1.1 Q0.3 11 0.3 10.2Z" fill="#9446ee"/><rect x="2.8" y="4.6" width="8.4" height="6.4" fill="#f1e8fd"/><rect x="2.8" y="5.2" width="8.4" height="1.3" fill="#9446ee"/><rect x="2.8" y="7.2" width="8.4" height="1.3" fill="#9446ee"/><rect x="2.8" y="9.3" width="8.4" height="1.7" fill="#9446ee"/></svg></div><div class="a" style="left:1113.4px;top:314.01px;height:14px;line-height:14px;font-size:11px;color:#3b3f4a;font-weight:400;transform:scaleX(0.8837);transform-origin:left center;">MAGAZIJN VOSSTRAAT</div><div class="a" style="left:277px;top:336px;width:1586px;height:1px;background:#e4e5ea;"></div><div class="a" style="left:264px;top:350px;width:1612px;height:682px;background:#fff;"></div><div class="a" style="left:275.2px;top:361.40px;height:28px;line-height:28px;font-size:22px;color:#2c3a55;font-weight:700;transform:scaleX(0.9657);transform-origin:left center;">Voorraad Verwacht</div><div class="a" style="left:474.5px;top:367.80px;height:14px;line-height:14px;font-size:11px;color:#3b3f4a;font-weight:400;">(</div><div class="a" style="left:483.5px;top:367.60px;height:14px;line-height:14px;font-size:11.3px;color:#3b3f4a;font-weight:400;transform:scaleX(0.9091);transform-origin:left center;">Gevalideerd weergeven</div><div class="a" style="left:603px;top:366px;width:27px;height:16px;background:#d3d9e2;border-radius:8px;"></div><div class="a" style="left:605px;top:368px;width:12px;height:12px;background:#fff;border-radius:50%;"></div><div class="a" style="left:635.5px;top:367.80px;height:14px;line-height:14px;font-size:11px;color:#3b3f4a;font-weight:400;">)</div><div class="a" style="left:647px;top:363px;width:133px;height:22px;background:#5d56ea;border-radius:3.5px;"></div><div class="a" style="left:654px;top:368px"><svg width="11" height="11" viewBox="0 0 11 11"><path d="M1 5.8 L4 8.6 L10 2.4" fill="none" stroke="#fff" stroke-width="1.3"/></svg></div><div class="a" style="left:669.6px;top:367.50px;height:12px;line-height:12px;font-size:9.8px;color:#fff;font-weight:400;transform:scaleX(0.9854);transform-origin:left center;-webkit-text-stroke:0.35px #fff;">Merk gecontroleerd (50)</div><div class="a" style="left:788px;top:363px;width:72px;height:22px;background:#5d56ea;border-radius:3.5px;"></div><div class="a" style="left:795px;top:368px"><svg width="11" height="12" viewBox="0 0 11 12"><path d="M5.2 2.2 A4.2 4.2 0 1 1 1.1 6.8" fill="none" stroke="#fff" stroke-width="1.3"/><path d="M2.8 2.2 L5.6 0.4 L5.6 4Z" fill="#fff"/></svg></div><div class="a" style="left:810.7px;top:367.50px;height:12px;line-height:12px;font-size:9.8px;color:#fff;font-weight:400;transform:scaleX(0.9132);transform-origin:left center;-webkit-text-stroke:0.35px #fff;">Reset (50)</div><div class="a" style="left:868px;top:363px;width:90px;height:22px;background:#5d56ea;border-radius:3.5px;"></div><div class="a" style="left:875px;top:368px"><svg width="11" height="11" viewBox="0 0 11 11"><path d="M1 5.8 L4 8.6 L10 2.4" fill="none" stroke="#fff" stroke-width="1.3"/></svg></div><div class="a" style="left:891.4px;top:367.50px;height:12px;line-height:12px;font-size:9.8px;color:#fff;font-weight:400;transform:scaleX(0.9545);transform-origin:left center;-webkit-text-stroke:0.35px #fff;">Valideren (50)</div><div class="a" style="left:1733px;top:362px;width:132px;height:23px;background:#f1f3f5;border-radius:3px;"></div><svg class="a" style="left:1743px;top:366.4px" width="13" height="13" viewBox="0 0 13 13"><circle cx="6" cy="6" r="4.3" fill="none" stroke="#526a82" stroke-width="0.95"/><path d="M9.1 9.1 L11.8 11.8" stroke="#526a82" stroke-width="1"/><path d="M3.9 6 H8.1" stroke="#526a82" stroke-width="1.1"/></svg><svg class="a" style="left:1776px;top:366.4px" width="13" height="13" viewBox="0 0 13 13"><circle cx="6" cy="6" r="4.3" fill="none" stroke="#526a82" stroke-width="0.95"/><path d="M9.1 9.1 L11.8 11.8" stroke="#526a82" stroke-width="1"/><path d="M3.9 6 H8.1" stroke="#526a82" stroke-width="1.1"/></svg><svg class="a" style="left:1809px;top:366.4px" width="13" height="13" viewBox="0 0 13 13"><circle cx="6" cy="6" r="4.3" fill="none" stroke="#526a82" stroke-width="0.95"/><path d="M9.1 9.1 L11.8 11.8" stroke="#526a82" stroke-width="1"/></svg><svg class="a" style="left:1842px;top:366.4px" width="13" height="13" viewBox="0 0 13 13"><circle cx="6" cy="6" r="4.3" fill="none" stroke="#526a82" stroke-width="0.95"/><path d="M9.1 9.1 L11.8 11.8" stroke="#526a82" stroke-width="1"/><path d="M3.9 6 H8.1 M6 3.9 V8.1" stroke="#526a82" stroke-width="1.1"/></svg><div class="a" style="left:275.3px;top:395.4px;width:599.3px;height:24px;background:#fff;border:1px solid #dcdfe4;border-radius:4px;"></div><div class="a" style="left:279.7px;top:400px;width:50.30000000000001px;height:15px;background:#f2f3f5;border-radius:2px;"></div><div class="a" style="left:288px;top:403.60px;height:10px;line-height:10px;font-size:8px;color:#4b515c;font-weight:400;transform:scaleX(0.9448);transform-origin:left center;">Artikel</div><div class="a" style="left:314px;top:402.5px"><svg width="11" height="11" viewBox="0 0 11 11"><circle cx="5.5" cy="5.5" r="4.5" fill="none" stroke="#2a2a2a" stroke-width="1.05"/><path d="M3.8 3.8 L7.2 7.2 M7.2 3.8 L3.8 7.2" stroke="#2a2a2a" stroke-width="1.05"/></svg></div><div class="a" style="left:334.4px;top:400px;width:100.0px;height:15px;background:#f2f3f5;border-radius:2px;"></div><div class="a" style="left:342px;top:403.60px;height:10px;line-height:10px;font-size:8px;color:#4b515c;font-weight:400;transform:scaleX(0.9358);transform-origin:left center;">Volledige beschrijving</div><div class="a" style="left:419px;top:402.5px"><svg width="11" height="11" viewBox="0 0 11 11"><circle cx="5.5" cy="5.5" r="4.5" fill="none" stroke="#2a2a2a" stroke-width="1.05"/><path d="M3.8 3.8 L7.2 7.2 M7.2 3.8 L3.8 7.2" stroke="#2a2a2a" stroke-width="1.05"/></svg></div><div class="a" style="left:439px;top:400px;width:47px;height:15px;background:#f2f3f5;border-radius:2px;"></div><div class="a" style="left:447.7px;top:403.60px;height:10px;line-height:10px;font-size:8px;color:#4b515c;font-weight:400;transform:scaleX(0.8745);transform-origin:left center;">Pallet</div><div class="a" style="left:471px;top:402.5px"><svg width="11" height="11" viewBox="0 0 11 11"><circle cx="5.5" cy="5.5" r="4.5" fill="none" stroke="#2a2a2a" stroke-width="1.05"/><path d="M3.8 3.8 L7.2 7.2 M7.2 3.8 L3.8 7.2" stroke="#2a2a2a" stroke-width="1.05"/></svg></div><div class="a" style="left:490.8px;top:400px;width:107.49999999999994px;height:15px;background:#f2f3f5;border-radius:2px;"></div><div class="a" style="left:498.75px;top:403.60px;height:10px;line-height:10px;font-size:8px;color:#4b515c;font-weight:400;transform:scaleX(0.9318);transform-origin:left center;">Ontbrekende pakketten</div><div class="a" style="left:581.8px;top:402.5px"><svg width="11" height="11" viewBox="0 0 11 11"><circle cx="5.5" cy="5.5" r="4.5" fill="none" stroke="#2a2a2a" stroke-width="1.05"/><path d="M3.8 3.8 L7.2 7.2 M7.2 3.8 L3.8 7.2" stroke="#2a2a2a" stroke-width="1.05"/></svg></div><div class="a" style="left:602px;top:400px;width:69.5px;height:15px;background:#f2f3f5;border-radius:2px;"></div><div class="a" style="left:609.8px;top:403.60px;height:10px;line-height:10px;font-size:8px;color:#4b515c;font-weight:400;transform:scaleX(0.9128);transform-origin:left center;">Hoeveelheid</div><div class="a" style="left:656px;top:402.5px"><svg width="11" height="11" viewBox="0 0 11 11"><circle cx="5.5" cy="5.5" r="4.5" fill="none" stroke="#2a2a2a" stroke-width="1.05"/><path d="M3.8 3.8 L7.2 7.2 M7.2 3.8 L3.8 7.2" stroke="#2a2a2a" stroke-width="1.05"/></svg></div><div class="a" style="left:676px;top:400px;width:94.5px;height:15px;background:#f2f3f5;border-radius:2px;"></div><div class="a" style="left:684px;top:403.60px;height:10px;line-height:10px;font-size:8px;color:#4b515c;font-weight:400;transform:scaleX(0.9260);transform-origin:left center;">Gewicht eenheid (g)</div><div class="a" style="left:755px;top:402.5px"><svg width="11" height="11" viewBox="0 0 11 11"><circle cx="5.5" cy="5.5" r="4.5" fill="none" stroke="#2a2a2a" stroke-width="1.05"/><path d="M3.8 3.8 L7.2 7.2 M7.2 3.8 L3.8 7.2" stroke="#2a2a2a" stroke-width="1.05"/></svg></div><div class="a" style="left:774.5px;top:400px;width:67.20000000000005px;height:15px;background:#f2f3f5;border-radius:2px;"></div><div class="a" style="left:783.4px;top:403.60px;height:10px;line-height:10px;font-size:8px;color:#4b515c;font-weight:400;transform:scaleX(0.9402);transform-origin:left center;">Bron depot</div><div class="a" style="left:825.5px;top:402.5px"><svg width="11" height="11" viewBox="0 0 11 11"><circle cx="5.5" cy="5.5" r="4.5" fill="none" stroke="#2a2a2a" stroke-width="1.05"/><path d="M3.8 3.8 L7.2 7.2 M7.2 3.8 L3.8 7.2" stroke="#2a2a2a" stroke-width="1.05"/></svg></div><div class="a" style="left:275.3px;top:431.00px;height:14px;line-height:14px;font-size:11px;color:#3b3f4a;font-weight:400;transform:scaleX(0.9118);transform-origin:left center;">Receptie ID</div><div class="a" style="left:339.4px;top:425.6px;width:158px;height:25px;background:#fff;border:1px solid #d7dae0;border-radius:3px;"></div><svg class="a" style="left:346.5px;top:432px" width="12" height="12" viewBox="0 0 12 12"><circle cx="5" cy="5" r="4" fill="none" stroke="#8a9099" stroke-width="1"/><path d="M8 8 L11 11" stroke="#8a9099" stroke-width="1.1"/></svg><div class="a" style="left:367px;top:431.00px;height:14px;line-height:14px;font-size:11px;color:#6b7280;font-weight:400;transform:scaleX(0.8962);transform-origin:left center;">Zoeken...</div><div class="a" style="left:263px;top:459px;width:1613px;height:1px;background:#e5e7eb;"></div><div class="a" style="left:592px;top:460px;width:654px;height:30px;background:#eeeefc;"></div><div class="a" style="left:263px;top:490px;width:1613px;height:1px;background:#e5e7eb;"></div><div class="a" style="left:275px;top:468px"><svg width="13" height="13" viewBox="0 0 13 13"><rect width="13" height="13" rx="2.5" fill="#5d57e6"/><path d="M3 6.8 L5.5 9 L10.2 4.3" fill="none" stroke="#eceaff" stroke-width="1"/></svg></div><div class="a" style="left:310px;top:467.00px;height:14px;line-height:14px;font-size:11.5px;color:#3b3f4a;font-weight:400;transform:scaleX(0.9107);transform-origin:left center;">Pallet</div><div class="a" style="left:410.8px;top:467.00px;height:14px;line-height:14px;font-size:11.5px;color:#2f3b52;font-weight:400;transform:scaleX(0.9577);transform-origin:left center;">Ontbrekende pakketten</div><div class="a" style="left:602.7px;top:468.00px;height:14px;line-height:14px;font-size:11px;color:#4a3fc0;font-weight:400;transform:scaleX(1.0006);transform-origin:left center;-webkit-text-stroke:0.42px #4a3fc0;">Artikel</div><svg class="a" style="left:634.3px;top:469.5px" width="9" height="10" viewBox="0 0 9 10"><rect x="1.05" y="1.6" width="1.2" height="7.7" fill="#6f6ad0"/><path d="M0 2.4 L1.65 0.3 L3.3 2.4Z" fill="#6f6ad0"/><rect x="3.7" y="3.4" width="1.6" height="1.4" fill="#aaa6df"/><rect x="3.7" y="5.5" width="2.9" height="1.5" fill="#a19dda"/><rect x="3.7" y="7.6" width="4.3" height="1.8" fill="#9894d6"/></svg><div class="a" style="left:648.9499999999999px;top:467.95px;width:12.9px;height:12.9px;border-radius:50%;background:#5b55e0;color:#fff;font-size:8px;font-weight:700;line-height:12.9px;text-align:center">4</div><div class="a" style="left:921.4px;top:468.00px;height:14px;line-height:14px;font-size:11px;color:#4a3fc0;font-weight:400;transform:scaleX(0.9882);transform-origin:left center;-webkit-text-stroke:0.42px #4a3fc0;">Bron depot</div><svg class="a" style="left:975.5px;top:469.5px" width="9" height="10" viewBox="0 0 9 10"><rect x="1.05" y="1.6" width="1.2" height="7.7" fill="#6f6ad0"/><path d="M0 2.4 L1.65 0.3 L3.3 2.4Z" fill="#6f6ad0"/><rect x="3.7" y="3.4" width="1.6" height="1.4" fill="#aaa6df"/><rect x="3.7" y="5.5" width="2.9" height="1.5" fill="#a19dda"/><rect x="3.7" y="7.6" width="4.3" height="1.8" fill="#9894d6"/></svg><div class="a" style="left:990.05px;top:467.95px;width:12.9px;height:12.9px;border-radius:50%;background:#5b55e0;color:#fff;font-size:8px;font-weight:700;line-height:12.9px;text-align:center">5</div><div class="a" style="left:1294.7px;top:467.00px;height:14px;line-height:14px;font-size:11.5px;color:#3b3f4a;font-weight:400;transform:scaleX(0.9369);transform-origin:left center;">Hoeveelheid</div><svg class="a" style="left:1355px;top:468px" width="10" height="11" viewBox="0 0 10 11"><path d="M2.5 10 V1.2 M1 2.8 L2.5 1 L4 2.8" fill="none" stroke="#555" stroke-width="1"/><path d="M7.5 1 V9.8 M6 8.2 L7.5 10 L9 8.2" fill="none" stroke="#555" stroke-width="1"/></svg><div class="a" style="right:389px;top:467.00px;height:14px;line-height:14px;font-size:11.5px;color:#3b3f4a;font-weight:400;text-align:right;transform:scaleX(0.9425);transform-origin:right center;">Gewicht eenheid (g)</div><div class="a" style="left:1552.5px;top:467.00px;height:14px;line-height:14px;font-size:11.5px;color:#3b3f4a;font-weight:400;transform:scaleX(0.9539);transform-origin:left center;">Volledige beschrijving</div><div class="a" style="left:602px;top:499px;width:64px;height:25px;background:#fff;border:1px solid #d4d7dd;border-radius:4px;"></div><div class="a" style="left:611.4px;top:503.80px;height:14px;line-height:14px;font-size:11px;color:#555b66;font-weight:400;transform:scaleX(0.8692);transform-origin:left center;">Elke</div><svg class="a" style="left:646.5px;top:508px" width="10" height="6" viewBox="0 0 10 6"><path d="M0.8 0.8 L5 5 L9.2 0.8" fill="none" stroke="#555" stroke-width="1"/></svg><div class="a" style="left:921.4px;top:499px;width:62.4px;height:25px;background:#fff;border:1px solid #d4d7dd;border-radius:4px;"></div><div class="a" style="left:930.8px;top:503.80px;height:14px;line-height:14px;font-size:11px;color:#555b66;font-weight:400;transform:scaleX(0.8692);transform-origin:left center;">Elke</div><svg class="a" style="left:965.9px;top:508px" width="10" height="6" viewBox="0 0 10 6"><path d="M0.8 0.8 L5 5 L9.2 0.8" fill="none" stroke="#555" stroke-width="1"/></svg><div class="a" style="left:263px;top:532px;width:1613px;height:1px;background:#e5e7eb;"></div><div class="a" style="left:263px;top:533px;width:1613px;height:31px;background:#f7f8fb;"></div><div class="a" style="left:263px;top:564px;width:1613px;height:1px;background:#e5e7eb;"></div><div class="a" style="left:275px;top:541.8px"><svg width="13" height="13" viewBox="0 0 13 13"><rect width="13" height="13" rx="2.5" fill="#5d57e6"/><path d="M3 6.8 L5.5 9 L10.2 4.3" fill="none" stroke="#eceaff" stroke-width="1"/></svg></div><div class="a" style="left:309.6px;top:541.30px;height:14px;line-height:14px;font-size:11px;color:#8b1e2b;font-weight:400;transform:scaleX(0.9371);transform-origin:left center;">359304</div><div class="a" style="left:378.5px;top:543.3px"><svg width="12" height="10" viewBox="0 0 12 10"><rect x="0" y="0" width="1.3" height="10" fill="#8e2b34"/><rect x="2" y="0" width="4.5" height="10" fill="#b35f68"/><rect x="7.2" y="0" width="1.3" height="10" fill="#8e2b34"/><rect x="9.6" y="0" width="1.5" height="10" fill="#8e2b34"/></svg></div><div class="a" style="left:411.3px;top:536px;width:12.5px;height:23.5px;background:#f5a30a;border-radius:3px;"></div><div class="a" style="left:417.6px;top:542.30px;height:12px;line-height:12px;font-size:10px;color:#3a2a05;font-weight:400;transform:translateX(-50%);">?</div><div class="a" style="left:428px;top:542.8px"><svg width="12" height="10" viewBox="0 0 12 10"><path d="M0.8 5.4 L4 8.5 L11 1.2" fill="none" stroke="#6a62d6" stroke-width="1.2"/></svg></div><div class="a" style="left:445px;top:541.8px"><svg width="11" height="12" viewBox="0 0 11 12"><path d="M5.2 2.2 A4.2 4.2 0 1 1 1.1 6.8" fill="none" stroke="#a6a1ea" stroke-width="1.1"/><path d="M2.8 2.2 L5.6 0.4 L5.6 4Z" fill="#a6a1ea"/></svg></div><div class="a" style="left:602.5px;top:543.30px;height:11px;line-height:11px;font-size:9px;color:#1f8a7a;font-weight:400;transform:scaleX(0.9430);transform-origin:left center;">#0402</div><div class="a" style="left:628.8px;top:541.30px;height:14px;line-height:14px;font-size:11px;color:#a0561f;font-weight:400;transform:scaleX(0.9356);transform-origin:left center;">Graanvlokken</div><div class="a" style="left:920.8px;top:542.5px"><svg width="14" height="11" viewBox="0 0 14 11"><path d="M0.3 3.2 Q0.3 2.2 1.3 1.8 L6 0.3 Q7 0 8 0.3 L12.7 1.8 Q13.7 2.2 13.7 3.2 V10.2 Q13.7 11 12.9 11 H1.1 Q0.3 11 0.3 10.2Z" fill="#9446ee"/><rect x="2.8" y="4.6" width="8.4" height="6.4" fill="#f1e8fd"/><rect x="2.8" y="5.2" width="8.4" height="1.3" fill="#9446ee"/><rect x="2.8" y="7.2" width="8.4" height="1.3" fill="#9446ee"/><rect x="2.8" y="9.3" width="8.4" height="1.7" fill="#9446ee"/></svg></div><div class="a" style="left:937.1px;top:541.30px;height:14px;line-height:14px;font-size:11px;color:#3b3f4a;font-weight:400;transform:scaleX(0.8747);transform-origin:left center;">VANAUVE LOGISTICS B.V.</div><div class="a" style="right:555.7px;top:541.30px;height:14px;line-height:14px;font-size:11px;color:#3b3f4a;font-weight:400;text-align:right;transform:scaleX(0.9214);transform-origin:right center;">161,00</div><div class="a" style="right:388.9000000000001px;top:541.30px;height:14px;line-height:14px;font-size:11px;color:#3b3f4a;font-weight:400;text-align:right;transform:scaleX(1.0134);transform-origin:right center;">0</div><div class="a" style="left:1552.4px;top:541.30px;height:14px;line-height:14px;font-size:11px;color:#3b3f4a;font-weight:400;transform:scaleX(0.8542);transform-origin:left center;">FICHE 485 KELLOGG`S</div><div class="a" style="left:263px;top:565px;width:1613px;height:31px;background:#ffffff;"></div><div class="a" style="left:263px;top:596px;width:1613px;height:1px;background:#e5e7eb;"></div><div class="a" style="left:275px;top:573.6px"><svg width="13" height="13" viewBox="0 0 13 13"><rect width="13" height="13" rx="2.5" fill="#5d57e6"/><path d="M3 6.8 L5.5 9 L10.2 4.3" fill="none" stroke="#eceaff" stroke-width="1"/></svg></div><div class="a" style="left:309.6px;top:573.10px;height:14px;line-height:14px;font-size:11px;color:#8b1e2b;font-weight:400;transform:scaleX(0.9371);transform-origin:left center;">358125</div><div class="a" style="left:378.5px;top:575.1px"><svg width="12" height="10" viewBox="0 0 12 10"><rect x="0" y="0" width="1.3" height="10" fill="#8e2b34"/><rect x="2" y="0" width="4.5" height="10" fill="#b35f68"/><rect x="7.2" y="0" width="1.3" height="10" fill="#8e2b34"/><rect x="9.6" y="0" width="1.5" height="10" fill="#8e2b34"/></svg></div><div class="a" style="left:411.3px;top:568px;width:12.5px;height:23.5px;background:#f5a30a;border-radius:3px;"></div><div class="a" style="left:417.6px;top:574.10px;height:12px;line-height:12px;font-size:10px;color:#3a2a05;font-weight:400;transform:translateX(-50%);">?</div><div class="a" style="left:428px;top:574.6px"><svg width="12" height="10" viewBox="0 0 12 10"><path d="M0.8 5.4 L4 8.5 L11 1.2" fill="none" stroke="#6a62d6" stroke-width="1.2"/></svg></div><div class="a" style="left:445px;top:573.6px"><svg width="11" height="12" viewBox="0 0 11 12"><path d="M5.2 2.2 A4.2 4.2 0 1 1 1.1 6.8" fill="none" stroke="#a6a1ea" stroke-width="1.1"/><path d="M2.8 2.2 L5.6 0.4 L5.6 4Z" fill="#a6a1ea"/></svg></div><div class="a" style="left:602.5px;top:575.10px;height:11px;line-height:11px;font-size:9px;color:#1f8a7a;font-weight:400;transform:scaleX(0.9430);transform-origin:left center;">#0402</div><div class="a" style="left:628.8px;top:573.10px;height:14px;line-height:14px;font-size:11px;color:#a0561f;font-weight:400;transform:scaleX(0.9356);transform-origin:left center;">Graanvlokken</div><div class="a" style="left:920.8px;top:574.3px"><svg width="14" height="11" viewBox="0 0 14 11"><path d="M0.3 3.2 Q0.3 2.2 1.3 1.8 L6 0.3 Q7 0 8 0.3 L12.7 1.8 Q13.7 2.2 13.7 3.2 V10.2 Q13.7 11 12.9 11 H1.1 Q0.3 11 0.3 10.2Z" fill="#9446ee"/><rect x="2.8" y="4.6" width="8.4" height="6.4" fill="#f1e8fd"/><rect x="2.8" y="5.2" width="8.4" height="1.3" fill="#9446ee"/><rect x="2.8" y="7.2" width="8.4" height="1.3" fill="#9446ee"/><rect x="2.8" y="9.3" width="8.4" height="1.7" fill="#9446ee"/></svg></div><div class="a" style="left:937.1px;top:573.10px;height:14px;line-height:14px;font-size:11px;color:#3b3f4a;font-weight:400;transform:scaleX(0.8747);transform-origin:left center;">VANAUVE LOGISTICS B.V.</div><div class="a" style="right:555.7px;top:573.10px;height:14px;line-height:14px;font-size:11px;color:#3b3f4a;font-weight:400;text-align:right;transform:scaleX(0.9214);transform-origin:right center;">310,00</div><div class="a" style="right:388.9000000000001px;top:573.10px;height:14px;line-height:14px;font-size:11px;color:#3b3f4a;font-weight:400;text-align:right;transform:scaleX(1.0134);transform-origin:right center;">0</div><div class="a" style="left:1552.4px;top:573.10px;height:14px;line-height:14px;font-size:11px;color:#3b3f4a;font-weight:400;transform:scaleX(0.8542);transform-origin:left center;">FICHE 464 KELLOGG`S</div><div class="a" style="left:263px;top:597px;width:1613px;height:31px;background:#f7f8fb;"></div><div class="a" style="left:263px;top:628px;width:1613px;height:1px;background:#e5e7eb;"></div><div class="a" style="left:275px;top:605.4px"><svg width="13" height="13" viewBox="0 0 13 13"><rect width="13" height="13" rx="2.5" fill="#5d57e6"/><path d="M3 6.8 L5.5 9 L10.2 4.3" fill="none" stroke="#eceaff" stroke-width="1"/></svg></div><div class="a" style="left:309.6px;top:604.90px;height:14px;line-height:14px;font-size:11px;color:#8b1e2b;font-weight:400;transform:scaleX(0.9371);transform-origin:left center;">358124</div><div class="a" style="left:378.5px;top:606.9px"><svg width="12" height="10" viewBox="0 0 12 10"><rect x="0" y="0" width="1.3" height="10" fill="#8e2b34"/><rect x="2" y="0" width="4.5" height="10" fill="#b35f68"/><rect x="7.2" y="0" width="1.3" height="10" fill="#8e2b34"/><rect x="9.6" y="0" width="1.5" height="10" fill="#8e2b34"/></svg></div><div class="a" style="left:411.3px;top:600px;width:12.5px;height:23.5px;background:#f5a30a;border-radius:3px;"></div><div class="a" style="left:417.6px;top:605.90px;height:12px;line-height:12px;font-size:10px;color:#3a2a05;font-weight:400;transform:translateX(-50%);">?</div><div class="a" style="left:428px;top:606.4px"><svg width="12" height="10" viewBox="0 0 12 10"><path d="M0.8 5.4 L4 8.5 L11 1.2" fill="none" stroke="#6a62d6" stroke-width="1.2"/></svg></div><div class="a" style="left:445px;top:605.4px"><svg width="11" height="12" viewBox="0 0 11 12"><path d="M5.2 2.2 A4.2 4.2 0 1 1 1.1 6.8" fill="none" stroke="#a6a1ea" stroke-width="1.1"/><path d="M2.8 2.2 L5.6 0.4 L5.6 4Z" fill="#a6a1ea"/></svg></div><div class="a" style="left:602.5px;top:606.90px;height:11px;line-height:11px;font-size:9px;color:#1f8a7a;font-weight:400;transform:scaleX(0.9430);transform-origin:left center;">#0402</div><div class="a" style="left:628.8px;top:604.90px;height:14px;line-height:14px;font-size:11px;color:#a0561f;font-weight:400;transform:scaleX(0.9356);transform-origin:left center;">Graanvlokken</div><div class="a" style="left:920.8px;top:606.1px"><svg width="14" height="11" viewBox="0 0 14 11"><path d="M0.3 3.2 Q0.3 2.2 1.3 1.8 L6 0.3 Q7 0 8 0.3 L12.7 1.8 Q13.7 2.2 13.7 3.2 V10.2 Q13.7 11 12.9 11 H1.1 Q0.3 11 0.3 10.2Z" fill="#9446ee"/><rect x="2.8" y="4.6" width="8.4" height="6.4" fill="#f1e8fd"/><rect x="2.8" y="5.2" width="8.4" height="1.3" fill="#9446ee"/><rect x="2.8" y="7.2" width="8.4" height="1.3" fill="#9446ee"/><rect x="2.8" y="9.3" width="8.4" height="1.7" fill="#9446ee"/></svg></div><div class="a" style="left:937.1px;top:604.90px;height:14px;line-height:14px;font-size:11px;color:#3b3f4a;font-weight:400;transform:scaleX(0.8747);transform-origin:left center;">VANAUVE LOGISTICS B.V.</div><div class="a" style="right:555.7px;top:604.90px;height:14px;line-height:14px;font-size:11px;color:#3b3f4a;font-weight:400;text-align:right;transform:scaleX(0.9214);transform-origin:right center;">320,00</div><div class="a" style="right:388.9000000000001px;top:604.90px;height:14px;line-height:14px;font-size:11px;color:#3b3f4a;font-weight:400;text-align:right;transform:scaleX(1.0134);transform-origin:right center;">0</div><div class="a" style="left:1552.4px;top:604.90px;height:14px;line-height:14px;font-size:11px;color:#3b3f4a;font-weight:400;transform:scaleX(0.8542);transform-origin:left center;">FICHE 464 KELLOGG`S</div><div class="a" style="left:263px;top:629px;width:1613px;height:30px;background:#f0f2f7;"></div><div class="a" style="left:263px;top:659px;width:1613px;height:1px;background:#e5e7eb;"></div><div class="a" style="left:275px;top:637.2px"><svg width="13" height="13" viewBox="0 0 13 13"><rect width="13" height="13" rx="2.5" fill="#5d57e6"/><path d="M3 6.8 L5.5 9 L10.2 4.3" fill="none" stroke="#eceaff" stroke-width="1"/></svg></div><div class="a" style="left:309.6px;top:636.70px;height:14px;line-height:14px;font-size:11px;color:#8b1e2b;font-weight:400;transform:scaleX(0.9371);transform-origin:left center;">359948</div><div class="a" style="left:378.5px;top:638.7px"><svg width="12" height="10" viewBox="0 0 12 10"><rect x="0" y="0" width="1.3" height="10" fill="#8e2b34"/><rect x="2" y="0" width="4.5" height="10" fill="#b35f68"/><rect x="7.2" y="0" width="1.3" height="10" fill="#8e2b34"/><rect x="9.6" y="0" width="1.5" height="10" fill="#8e2b34"/></svg></div><div class="a" style="left:411.3px;top:632px;width:12.5px;height:23.5px;background:#f5a30a;border-radius:3px;"></div><div class="a" style="left:417.6px;top:637.70px;height:12px;line-height:12px;font-size:10px;color:#3a2a05;font-weight:400;transform:translateX(-50%);">?</div><div class="a" style="left:428px;top:638.2px"><svg width="12" height="10" viewBox="0 0 12 10"><path d="M0.8 5.4 L4 8.5 L11 1.2" fill="none" stroke="#6a62d6" stroke-width="1.2"/></svg></div><div class="a" style="left:445px;top:637.2px"><svg width="11" height="12" viewBox="0 0 11 12"><path d="M5.2 2.2 A4.2 4.2 0 1 1 1.1 6.8" fill="none" stroke="#a6a1ea" stroke-width="1.1"/><path d="M2.8 2.2 L5.6 0.4 L5.6 4Z" fill="#a6a1ea"/></svg></div><div class="a" style="left:602.5px;top:638.70px;height:11px;line-height:11px;font-size:9px;color:#1f8a7a;font-weight:400;transform:scaleX(0.9430);transform-origin:left center;">#0905</div><div class="a" style="left:628.8px;top:636.70px;height:14px;line-height:14px;font-size:11px;color:#a0561f;font-weight:400;transform:scaleX(0.9288);transform-origin:left center;">Soya melk</div><div class="a" style="left:920.8px;top:637.9px"><svg width="14" height="11" viewBox="0 0 14 11"><path d="M0.3 3.2 Q0.3 2.2 1.3 1.8 L6 0.3 Q7 0 8 0.3 L12.7 1.8 Q13.7 2.2 13.7 3.2 V10.2 Q13.7 11 12.9 11 H1.1 Q0.3 11 0.3 10.2Z" fill="#9446ee"/><rect x="2.8" y="4.6" width="8.4" height="6.4" fill="#f1e8fd"/><rect x="2.8" y="5.2" width="8.4" height="1.3" fill="#9446ee"/><rect x="2.8" y="7.2" width="8.4" height="1.3" fill="#9446ee"/><rect x="2.8" y="9.3" width="8.4" height="1.7" fill="#9446ee"/></svg></div><div class="a" style="left:937.1px;top:636.70px;height:14px;line-height:14px;font-size:11px;color:#3b3f4a;font-weight:400;transform:scaleX(0.8747);transform-origin:left center;">VANAUVE LOGISTICS B.V.</div><div class="a" style="right:555.7px;top:636.70px;height:14px;line-height:14px;font-size:11px;color:#3b3f4a;font-weight:400;text-align:right;transform:scaleX(0.9214);transform-origin:right center;">672,00</div><div class="a" style="right:388.9000000000001px;top:636.70px;height:14px;line-height:14px;font-size:11px;color:#3b3f4a;font-weight:400;text-align:right;transform:scaleX(0.8828);transform-origin:right center;">1.000</div><div class="a" style="left:1552.4px;top:636.70px;height:14px;line-height:14px;font-size:11px;color:#3b3f4a;font-weight:400;transform:scaleX(0.8886);transform-origin:left center;">FICHE 499 L SOYA DRINK LIGHT 1L</div><div class="a" style="left:263px;top:661px;width:1613px;height:30px;background:#f7f8fb;"></div><div class="a" style="left:263px;top:691px;width:1613px;height:1px;background:#e5e7eb;"></div><div class="a" style="left:275px;top:669.0px"><svg width="13" height="13" viewBox="0 0 13 13"><rect width="13" height="13" rx="2.5" fill="#5d57e6"/><path d="M3 6.8 L5.5 9 L10.2 4.3" fill="none" stroke="#eceaff" stroke-width="1"/></svg></div><div class="a" style="left:309.6px;top:668.50px;height:14px;line-height:14px;font-size:11px;color:#8b1e2b;font-weight:400;transform:scaleX(0.9371);transform-origin:left center;">359951</div><div class="a" style="left:378.5px;top:670.5px"><svg width="12" height="10" viewBox="0 0 12 10"><rect x="0" y="0" width="1.3" height="10" fill="#8e2b34"/><rect x="2" y="0" width="4.5" height="10" fill="#b35f68"/><rect x="7.2" y="0" width="1.3" height="10" fill="#8e2b34"/><rect x="9.6" y="0" width="1.5" height="10" fill="#8e2b34"/></svg></div><div class="a" style="left:411.3px;top:664px;width:12.5px;height:23.5px;background:#f5a30a;border-radius:3px;"></div><div class="a" style="left:417.6px;top:669.50px;height:12px;line-height:12px;font-size:10px;color:#3a2a05;font-weight:400;transform:translateX(-50%);">?</div><div class="a" style="left:428px;top:670.0px"><svg width="12" height="10" viewBox="0 0 12 10"><path d="M0.8 5.4 L4 8.5 L11 1.2" fill="none" stroke="#6a62d6" stroke-width="1.2"/></svg></div><div class="a" style="left:445px;top:669.0px"><svg width="11" height="12" viewBox="0 0 11 12"><path d="M5.2 2.2 A4.2 4.2 0 1 1 1.1 6.8" fill="none" stroke="#a6a1ea" stroke-width="1.1"/><path d="M2.8 2.2 L5.6 0.4 L5.6 4Z" fill="#a6a1ea"/></svg></div><div class="a" style="left:602.5px;top:670.50px;height:11px;line-height:11px;font-size:9px;color:#1f8a7a;font-weight:400;transform:scaleX(0.9430);transform-origin:left center;">#0905</div><div class="a" style="left:628.8px;top:668.50px;height:14px;line-height:14px;font-size:11px;color:#a0561f;font-weight:400;transform:scaleX(0.9288);transform-origin:left center;">Soya melk</div><div class="a" style="left:920.8px;top:669.7px"><svg width="14" height="11" viewBox="0 0 14 11"><path d="M0.3 3.2 Q0.3 2.2 1.3 1.8 L6 0.3 Q7 0 8 0.3 L12.7 1.8 Q13.7 2.2 13.7 3.2 V10.2 Q13.7 11 12.9 11 H1.1 Q0.3 11 0.3 10.2Z" fill="#9446ee"/><rect x="2.8" y="4.6" width="8.4" height="6.4" fill="#f1e8fd"/><rect x="2.8" y="5.2" width="8.4" height="1.3" fill="#9446ee"/><rect x="2.8" y="7.2" width="8.4" height="1.3" fill="#9446ee"/><rect x="2.8" y="9.3" width="8.4" height="1.7" fill="#9446ee"/></svg></div><div class="a" style="left:937.1px;top:668.50px;height:14px;line-height:14px;font-size:11px;color:#3b3f4a;font-weight:400;transform:scaleX(0.8747);transform-origin:left center;">VANAUVE LOGISTICS B.V.</div><div class="a" style="right:555.7px;top:668.50px;height:14px;line-height:14px;font-size:11px;color:#3b3f4a;font-weight:400;text-align:right;transform:scaleX(0.9214);transform-origin:right center;">632,00</div><div class="a" style="right:388.9000000000001px;top:668.50px;height:14px;line-height:14px;font-size:11px;color:#3b3f4a;font-weight:400;text-align:right;transform:scaleX(0.8828);transform-origin:right center;">1.000</div><div class="a" style="left:1552.4px;top:668.50px;height:14px;line-height:14px;font-size:11px;color:#3b3f4a;font-weight:400;transform:scaleX(0.8939);transform-origin:left center;">FICHE 499 L OAT DRINK 1L</div><div class="a" style="left:263px;top:692px;width:1613px;height:31px;background:#ffffff;"></div><div class="a" style="left:263px;top:723px;width:1613px;height:1px;background:#e5e7eb;"></div><div class="a" style="left:275px;top:700.8px"><svg width="13" height="13" viewBox="0 0 13 13"><rect width="13" height="13" rx="2.5" fill="#5d57e6"/><path d="M3 6.8 L5.5 9 L10.2 4.3" fill="none" stroke="#eceaff" stroke-width="1"/></svg></div><div class="a" style="left:309.6px;top:700.30px;height:14px;line-height:14px;font-size:11px;color:#8b1e2b;font-weight:400;transform:scaleX(0.9371);transform-origin:left center;">359478</div><div class="a" style="left:378.5px;top:702.3px"><svg width="12" height="10" viewBox="0 0 12 10"><rect x="0" y="0" width="1.3" height="10" fill="#8e2b34"/><rect x="2" y="0" width="4.5" height="10" fill="#b35f68"/><rect x="7.2" y="0" width="1.3" height="10" fill="#8e2b34"/><rect x="9.6" y="0" width="1.5" height="10" fill="#8e2b34"/></svg></div><div class="a" style="left:411.3px;top:695px;width:12.5px;height:23.5px;background:#f5a30a;border-radius:3px;"></div><div class="a" style="left:417.6px;top:701.30px;height:12px;line-height:12px;font-size:10px;color:#3a2a05;font-weight:400;transform:translateX(-50%);">?</div><div class="a" style="left:428px;top:701.8px"><svg width="12" height="10" viewBox="0 0 12 10"><path d="M0.8 5.4 L4 8.5 L11 1.2" fill="none" stroke="#6a62d6" stroke-width="1.2"/></svg></div><div class="a" style="left:445px;top:700.8px"><svg width="11" height="12" viewBox="0 0 11 12"><path d="M5.2 2.2 A4.2 4.2 0 1 1 1.1 6.8" fill="none" stroke="#a6a1ea" stroke-width="1.1"/><path d="M2.8 2.2 L5.6 0.4 L5.6 4Z" fill="#a6a1ea"/></svg></div><div class="a" style="left:602.5px;top:702.30px;height:11px;line-height:11px;font-size:9px;color:#1f8a7a;font-weight:400;transform:scaleX(0.9430);transform-origin:left center;">#2003</div><div class="a" style="left:628.8px;top:700.30px;height:14px;line-height:14px;font-size:11px;color:#a0561f;font-weight:400;transform:scaleX(0.9415);transform-origin:left center;">Fruitconserven</div><div class="a" style="left:920.8px;top:701.5px"><svg width="14" height="11" viewBox="0 0 14 11"><path d="M0.3 3.2 Q0.3 2.2 1.3 1.8 L6 0.3 Q7 0 8 0.3 L12.7 1.8 Q13.7 2.2 13.7 3.2 V10.2 Q13.7 11 12.9 11 H1.1 Q0.3 11 0.3 10.2Z" fill="#9446ee"/><rect x="2.8" y="4.6" width="8.4" height="6.4" fill="#f1e8fd"/><rect x="2.8" y="5.2" width="8.4" height="1.3" fill="#9446ee"/><rect x="2.8" y="7.2" width="8.4" height="1.3" fill="#9446ee"/><rect x="2.8" y="9.3" width="8.4" height="1.7" fill="#9446ee"/></svg></div><div class="a" style="left:937.1px;top:700.30px;height:14px;line-height:14px;font-size:11px;color:#3b3f4a;font-weight:400;transform:scaleX(0.8747);transform-origin:left center;">VANAUVE LOGISTICS B.V.</div><div class="a" style="right:555.7px;top:700.30px;height:14px;line-height:14px;font-size:11px;color:#3b3f4a;font-weight:400;text-align:right;transform:scaleX(0.9214);transform-origin:right center;">500,00</div><div class="a" style="right:388.9000000000001px;top:700.30px;height:14px;line-height:14px;font-size:11px;color:#3b3f4a;font-weight:400;text-align:right;transform:scaleX(0.8990);transform-origin:right center;">25</div><div class="a" style="left:1552.4px;top:700.30px;height:14px;line-height:14px;font-size:11px;color:#3b3f4a;font-weight:400;transform:scaleX(0.8882);transform-origin:left center;">FICHE 472 CONFITURE 25gr</div><div class="a" style="left:263px;top:724px;width:1613px;height:31px;background:#f7f8fb;"></div><div class="a" style="left:263px;top:755px;width:1613px;height:1px;background:#e5e7eb;"></div><div class="a" style="left:275px;top:732.6px"><svg width="13" height="13" viewBox="0 0 13 13"><rect width="13" height="13" rx="2.5" fill="#5d57e6"/><path d="M3 6.8 L5.5 9 L10.2 4.3" fill="none" stroke="#eceaff" stroke-width="1"/></svg></div><div class="a" style="left:309.6px;top:732.10px;height:14px;line-height:14px;font-size:11px;color:#8b1e2b;font-weight:400;transform:scaleX(0.9371);transform-origin:left center;">360014</div><div class="a" style="left:378.5px;top:734.1px"><svg width="12" height="10" viewBox="0 0 12 10"><rect x="0" y="0" width="1.3" height="10" fill="#8e2b34"/><rect x="2" y="0" width="4.5" height="10" fill="#b35f68"/><rect x="7.2" y="0" width="1.3" height="10" fill="#8e2b34"/><rect x="9.6" y="0" width="1.5" height="10" fill="#8e2b34"/></svg></div><div class="a" style="left:411.3px;top:727px;width:12.5px;height:23.5px;background:#f5a30a;border-radius:3px;"></div><div class="a" style="left:417.6px;top:733.10px;height:12px;line-height:12px;font-size:10px;color:#3a2a05;font-weight:400;transform:translateX(-50%);">?</div><div class="a" style="left:428px;top:733.6px"><svg width="12" height="10" viewBox="0 0 12 10"><path d="M0.8 5.4 L4 8.5 L11 1.2" fill="none" stroke="#6a62d6" stroke-width="1.2"/></svg></div><div class="a" style="left:445px;top:732.6px"><svg width="11" height="12" viewBox="0 0 11 12"><path d="M5.2 2.2 A4.2 4.2 0 1 1 1.1 6.8" fill="none" stroke="#a6a1ea" stroke-width="1.1"/><path d="M2.8 2.2 L5.6 0.4 L5.6 4Z" fill="#a6a1ea"/></svg></div><div class="a" style="left:602.5px;top:734.10px;height:11px;line-height:11px;font-size:9px;color:#1f8a7a;font-weight:400;transform:scaleX(0.9430);transform-origin:left center;">#2100</div><div class="a" style="left:628.8px;top:732.10px;height:14px;line-height:14px;font-size:11px;color:#a0561f;font-weight:400;transform:scaleX(0.9490);transform-origin:left center;">AlgemeenGroentenconserven</div><div class="a" style="left:920.8px;top:733.3px"><svg width="14" height="11" viewBox="0 0 14 11"><path d="M0.3 3.2 Q0.3 2.2 1.3 1.8 L6 0.3 Q7 0 8 0.3 L12.7 1.8 Q13.7 2.2 13.7 3.2 V10.2 Q13.7 11 12.9 11 H1.1 Q0.3 11 0.3 10.2Z" fill="#9446ee"/><rect x="2.8" y="4.6" width="8.4" height="6.4" fill="#f1e8fd"/><rect x="2.8" y="5.2" width="8.4" height="1.3" fill="#9446ee"/><rect x="2.8" y="7.2" width="8.4" height="1.3" fill="#9446ee"/><rect x="2.8" y="9.3" width="8.4" height="1.7" fill="#9446ee"/></svg></div><div class="a" style="left:937.1px;top:732.10px;height:14px;line-height:14px;font-size:11px;color:#3b3f4a;font-weight:400;transform:scaleX(0.8747);transform-origin:left center;">VANAUVE LOGISTICS B.V.</div><div class="a" style="right:555.7px;top:732.10px;height:14px;line-height:14px;font-size:11px;color:#3b3f4a;font-weight:400;text-align:right;transform:scaleX(0.9214);transform-origin:right center;">864,00</div><div class="a" style="right:388.9000000000001px;top:732.10px;height:14px;line-height:14px;font-size:11px;color:#3b3f4a;font-weight:400;text-align:right;transform:scaleX(0.9262);transform-origin:right center;">400</div><div class="a" style="left:1552.4px;top:732.10px;height:14px;line-height:14px;font-size:11px;color:#3b3f4a;font-weight:400;transform:scaleX(0.8623);transform-origin:left center;">FICHE 495 L WORTELSCHIJFJES 400gr</div><div class="a" style="left:263px;top:756px;width:1613px;height:31px;background:#ffffff;"></div><div class="a" style="left:263px;top:787px;width:1613px;height:1px;background:#e5e7eb;"></div><div class="a" style="left:275px;top:764.4px"><svg width="13" height="13" viewBox="0 0 13 13"><rect width="13" height="13" rx="2.5" fill="#5d57e6"/><path d="M3 6.8 L5.5 9 L10.2 4.3" fill="none" stroke="#eceaff" stroke-width="1"/></svg></div><div class="a" style="left:309.6px;top:763.90px;height:14px;line-height:14px;font-size:11px;color:#8b1e2b;font-weight:400;transform:scaleX(0.9371);transform-origin:left center;">360015</div><div class="a" style="left:378.5px;top:765.9px"><svg width="12" height="10" viewBox="0 0 12 10"><rect x="0" y="0" width="1.3" height="10" fill="#8e2b34"/><rect x="2" y="0" width="4.5" height="10" fill="#b35f68"/><rect x="7.2" y="0" width="1.3" height="10" fill="#8e2b34"/><rect x="9.6" y="0" width="1.5" height="10" fill="#8e2b34"/></svg></div><div class="a" style="left:411.3px;top:759px;width:12.5px;height:23.5px;background:#f5a30a;border-radius:3px;"></div><div class="a" style="left:417.6px;top:764.90px;height:12px;line-height:12px;font-size:10px;color:#3a2a05;font-weight:400;transform:translateX(-50%);">?</div><div class="a" style="left:428px;top:765.4px"><svg width="12" height="10" viewBox="0 0 12 10"><path d="M0.8 5.4 L4 8.5 L11 1.2" fill="none" stroke="#6a62d6" stroke-width="1.2"/></svg></div><div class="a" style="left:445px;top:764.4px"><svg width="11" height="12" viewBox="0 0 11 12"><path d="M5.2 2.2 A4.2 4.2 0 1 1 1.1 6.8" fill="none" stroke="#a6a1ea" stroke-width="1.1"/><path d="M2.8 2.2 L5.6 0.4 L5.6 4Z" fill="#a6a1ea"/></svg></div><div class="a" style="left:602.5px;top:765.90px;height:11px;line-height:11px;font-size:9px;color:#1f8a7a;font-weight:400;transform:scaleX(0.9430);transform-origin:left center;">#2100</div><div class="a" style="left:628.8px;top:763.90px;height:14px;line-height:14px;font-size:11px;color:#a0561f;font-weight:400;transform:scaleX(0.9490);transform-origin:left center;">AlgemeenGroentenconserven</div><div class="a" style="left:920.8px;top:765.1px"><svg width="14" height="11" viewBox="0 0 14 11"><path d="M0.3 3.2 Q0.3 2.2 1.3 1.8 L6 0.3 Q7 0 8 0.3 L12.7 1.8 Q13.7 2.2 13.7 3.2 V10.2 Q13.7 11 12.9 11 H1.1 Q0.3 11 0.3 10.2Z" fill="#9446ee"/><rect x="2.8" y="4.6" width="8.4" height="6.4" fill="#f1e8fd"/><rect x="2.8" y="5.2" width="8.4" height="1.3" fill="#9446ee"/><rect x="2.8" y="7.2" width="8.4" height="1.3" fill="#9446ee"/><rect x="2.8" y="9.3" width="8.4" height="1.7" fill="#9446ee"/></svg></div><div class="a" style="left:937.1px;top:763.90px;height:14px;line-height:14px;font-size:11px;color:#3b3f4a;font-weight:400;transform:scaleX(0.8747);transform-origin:left center;">VANAUVE LOGISTICS B.V.</div><div class="a" style="right:555.7px;top:763.90px;height:14px;line-height:14px;font-size:11px;color:#3b3f4a;font-weight:400;text-align:right;transform:scaleX(0.9214);transform-origin:right center;">864,00</div><div class="a" style="right:388.9000000000001px;top:763.90px;height:14px;line-height:14px;font-size:11px;color:#3b3f4a;font-weight:400;text-align:right;transform:scaleX(0.9262);transform-origin:right center;">400</div><div class="a" style="left:1552.4px;top:763.90px;height:14px;line-height:14px;font-size:11px;color:#3b3f4a;font-weight:400;transform:scaleX(0.8623);transform-origin:left center;">FICHE 495 L WORTELSCHIJFJES 400gr</div><div class="a" style="left:263px;top:788px;width:1613px;height:30px;background:#f7f8fb;"></div><div class="a" style="left:263px;top:818px;width:1613px;height:1px;background:#e5e7eb;"></div><div class="a" style="left:275px;top:796.2px"><svg width="13" height="13" viewBox="0 0 13 13"><rect width="13" height="13" rx="2.5" fill="#5d57e6"/><path d="M3 6.8 L5.5 9 L10.2 4.3" fill="none" stroke="#eceaff" stroke-width="1"/></svg></div><div class="a" style="left:309.6px;top:795.70px;height:14px;line-height:14px;font-size:11px;color:#8b1e2b;font-weight:400;transform:scaleX(0.9371);transform-origin:left center;">359187</div><div class="a" style="left:378.5px;top:797.7px"><svg width="12" height="10" viewBox="0 0 12 10"><rect x="0" y="0" width="1.3" height="10" fill="#8e2b34"/><rect x="2" y="0" width="4.5" height="10" fill="#b35f68"/><rect x="7.2" y="0" width="1.3" height="10" fill="#8e2b34"/><rect x="9.6" y="0" width="1.5" height="10" fill="#8e2b34"/></svg></div><div class="a" style="left:411.3px;top:791px;width:12.5px;height:23.5px;background:#f5a30a;border-radius:3px;"></div><div class="a" style="left:417.6px;top:796.70px;height:12px;line-height:12px;font-size:10px;color:#3a2a05;font-weight:400;transform:translateX(-50%);">?</div><div class="a" style="left:428px;top:797.2px"><svg width="12" height="10" viewBox="0 0 12 10"><path d="M0.8 5.4 L4 8.5 L11 1.2" fill="none" stroke="#6a62d6" stroke-width="1.2"/></svg></div><div class="a" style="left:445px;top:796.2px"><svg width="11" height="12" viewBox="0 0 11 12"><path d="M5.2 2.2 A4.2 4.2 0 1 1 1.1 6.8" fill="none" stroke="#a6a1ea" stroke-width="1.1"/><path d="M2.8 2.2 L5.6 0.4 L5.6 4Z" fill="#a6a1ea"/></svg></div><div class="a" style="left:602.5px;top:797.70px;height:11px;line-height:11px;font-size:9px;color:#1f8a7a;font-weight:400;transform:scaleX(0.9430);transform-origin:left center;">#2800</div><div class="a" style="left:628.8px;top:795.70px;height:14px;line-height:14px;font-size:11px;color:#a0561f;font-weight:400;transform:scaleX(0.9546);transform-origin:left center;">AlgemeenDrank</div><div class="a" style="left:920.8px;top:796.9px"><svg width="14" height="11" viewBox="0 0 14 11"><path d="M0.3 3.2 Q0.3 2.2 1.3 1.8 L6 0.3 Q7 0 8 0.3 L12.7 1.8 Q13.7 2.2 13.7 3.2 V10.2 Q13.7 11 12.9 11 H1.1 Q0.3 11 0.3 10.2Z" fill="#9446ee"/><rect x="2.8" y="4.6" width="8.4" height="6.4" fill="#f1e8fd"/><rect x="2.8" y="5.2" width="8.4" height="1.3" fill="#9446ee"/><rect x="2.8" y="7.2" width="8.4" height="1.3" fill="#9446ee"/><rect x="2.8" y="9.3" width="8.4" height="1.7" fill="#9446ee"/></svg></div><div class="a" style="left:937.1px;top:795.70px;height:14px;line-height:14px;font-size:11px;color:#3b3f4a;font-weight:400;transform:scaleX(0.8747);transform-origin:left center;">VANAUVE LOGISTICS B.V.</div><div class="a" style="right:555.7px;top:795.70px;height:14px;line-height:14px;font-size:11px;color:#3b3f4a;font-weight:400;text-align:right;transform:scaleX(0.9178);transform-origin:right center;">1.029,60</div><div class="a" style="right:388.9000000000001px;top:795.70px;height:14px;line-height:14px;font-size:11px;color:#3b3f4a;font-weight:400;text-align:right;transform:scaleX(0.8828);transform-origin:right center;">1.980</div><div class="a" style="left:1552.4px;top:795.70px;height:14px;line-height:14px;font-size:11px;color:#3b3f4a;font-weight:400;transform:scaleX(0.8961);transform-origin:left center;">FICHE 480 VAVAL ORANGE 33cl</div><div class="a" style="left:263px;top:819px;width:1613px;height:31px;background:#ffffff;"></div><div class="a" style="left:263px;top:850px;width:1613px;height:1px;background:#e5e7eb;"></div><div class="a" style="left:275px;top:828.0px"><svg width="13" height="13" viewBox="0 0 13 13"><rect width="13" height="13" rx="2.5" fill="#5d57e6"/><path d="M3 6.8 L5.5 9 L10.2 4.3" fill="none" stroke="#eceaff" stroke-width="1"/></svg></div><div class="a" style="left:309.6px;top:827.50px;height:14px;line-height:14px;font-size:11px;color:#8b1e2b;font-weight:400;transform:scaleX(0.9371);transform-origin:left center;">359188</div><div class="a" style="left:378.5px;top:829.5px"><svg width="12" height="10" viewBox="0 0 12 10"><rect x="0" y="0" width="1.3" height="10" fill="#8e2b34"/><rect x="2" y="0" width="4.5" height="10" fill="#b35f68"/><rect x="7.2" y="0" width="1.3" height="10" fill="#8e2b34"/><rect x="9.6" y="0" width="1.5" height="10" fill="#8e2b34"/></svg></div><div class="a" style="left:411.3px;top:822px;width:12.5px;height:23.5px;background:#f5a30a;border-radius:3px;"></div><div class="a" style="left:417.6px;top:828.50px;height:12px;line-height:12px;font-size:10px;color:#3a2a05;font-weight:400;transform:translateX(-50%);">?</div><div class="a" style="left:428px;top:829.0px"><svg width="12" height="10" viewBox="0 0 12 10"><path d="M0.8 5.4 L4 8.5 L11 1.2" fill="none" stroke="#6a62d6" stroke-width="1.2"/></svg></div><div class="a" style="left:445px;top:828.0px"><svg width="11" height="12" viewBox="0 0 11 12"><path d="M5.2 2.2 A4.2 4.2 0 1 1 1.1 6.8" fill="none" stroke="#a6a1ea" stroke-width="1.1"/><path d="M2.8 2.2 L5.6 0.4 L5.6 4Z" fill="#a6a1ea"/></svg></div><div class="a" style="left:602.5px;top:829.50px;height:11px;line-height:11px;font-size:9px;color:#1f8a7a;font-weight:400;transform:scaleX(0.9430);transform-origin:left center;">#2800</div><div class="a" style="left:628.8px;top:827.50px;height:14px;line-height:14px;font-size:11px;color:#a0561f;font-weight:400;transform:scaleX(0.9546);transform-origin:left center;">AlgemeenDrank</div><div class="a" style="left:920.8px;top:828.7px"><svg width="14" height="11" viewBox="0 0 14 11"><path d="M0.3 3.2 Q0.3 2.2 1.3 1.8 L6 0.3 Q7 0 8 0.3 L12.7 1.8 Q13.7 2.2 13.7 3.2 V10.2 Q13.7 11 12.9 11 H1.1 Q0.3 11 0.3 10.2Z" fill="#9446ee"/><rect x="2.8" y="4.6" width="8.4" height="6.4" fill="#f1e8fd"/><rect x="2.8" y="5.2" width="8.4" height="1.3" fill="#9446ee"/><rect x="2.8" y="7.2" width="8.4" height="1.3" fill="#9446ee"/><rect x="2.8" y="9.3" width="8.4" height="1.7" fill="#9446ee"/></svg></div><div class="a" style="left:937.1px;top:827.50px;height:14px;line-height:14px;font-size:11px;color:#3b3f4a;font-weight:400;transform:scaleX(0.8747);transform-origin:left center;">VANAUVE LOGISTICS B.V.</div><div class="a" style="right:555.7px;top:827.50px;height:14px;line-height:14px;font-size:11px;color:#3b3f4a;font-weight:400;text-align:right;transform:scaleX(0.9178);transform-origin:right center;">1.029,60</div><div class="a" style="right:388.9000000000001px;top:827.50px;height:14px;line-height:14px;font-size:11px;color:#3b3f4a;font-weight:400;text-align:right;transform:scaleX(0.8828);transform-origin:right center;">1.980</div><div class="a" style="left:1552.4px;top:827.50px;height:14px;line-height:14px;font-size:11px;color:#3b3f4a;font-weight:400;transform:scaleX(0.8961);transform-origin:left center;">FICHE 480 VAVAL ORANGE 33cl</div><div class="a" style="left:263px;top:851px;width:1613px;height:31px;background:#f7f8fb;"></div><div class="a" style="left:263px;top:882px;width:1613px;height:1px;background:#e5e7eb;"></div><div class="a" style="left:275px;top:859.8px"><svg width="13" height="13" viewBox="0 0 13 13"><rect width="13" height="13" rx="2.5" fill="#5d57e6"/><path d="M3 6.8 L5.5 9 L10.2 4.3" fill="none" stroke="#eceaff" stroke-width="1"/></svg></div><div class="a" style="left:309.6px;top:859.30px;height:14px;line-height:14px;font-size:11px;color:#8b1e2b;font-weight:400;transform:scaleX(0.9371);transform-origin:left center;">359526</div><div class="a" style="left:378.5px;top:861.3px"><svg width="12" height="10" viewBox="0 0 12 10"><rect x="0" y="0" width="1.3" height="10" fill="#8e2b34"/><rect x="2" y="0" width="4.5" height="10" fill="#b35f68"/><rect x="7.2" y="0" width="1.3" height="10" fill="#8e2b34"/><rect x="9.6" y="0" width="1.5" height="10" fill="#8e2b34"/></svg></div><div class="a" style="left:411.3px;top:854px;width:12.5px;height:23.5px;background:#f5a30a;border-radius:3px;"></div><div class="a" style="left:417.6px;top:860.30px;height:12px;line-height:12px;font-size:10px;color:#3a2a05;font-weight:400;transform:translateX(-50%);">?</div><div class="a" style="left:428px;top:860.8px"><svg width="12" height="10" viewBox="0 0 12 10"><path d="M0.8 5.4 L4 8.5 L11 1.2" fill="none" stroke="#6a62d6" stroke-width="1.2"/></svg></div><div class="a" style="left:445px;top:859.8px"><svg width="11" height="12" viewBox="0 0 11 12"><path d="M5.2 2.2 A4.2 4.2 0 1 1 1.1 6.8" fill="none" stroke="#a6a1ea" stroke-width="1.1"/><path d="M2.8 2.2 L5.6 0.4 L5.6 4Z" fill="#a6a1ea"/></svg></div><div class="a" style="left:602.5px;top:861.30px;height:11px;line-height:11px;font-size:9px;color:#1f8a7a;font-weight:400;transform:scaleX(0.9430);transform-origin:left center;">#6704</div><div class="a" style="left:628.8px;top:859.30px;height:14px;line-height:14px;font-size:11px;color:#a0561f;font-weight:400;transform:scaleX(0.9588);transform-origin:left center;">Maandverbanden</div><div class="a" style="left:920.8px;top:860.5px"><svg width="14" height="11" viewBox="0 0 14 11"><path d="M0.3 3.2 Q0.3 2.2 1.3 1.8 L6 0.3 Q7 0 8 0.3 L12.7 1.8 Q13.7 2.2 13.7 3.2 V10.2 Q13.7 11 12.9 11 H1.1 Q0.3 11 0.3 10.2Z" fill="#9446ee"/><rect x="2.8" y="4.6" width="8.4" height="6.4" fill="#f1e8fd"/><rect x="2.8" y="5.2" width="8.4" height="1.3" fill="#9446ee"/><rect x="2.8" y="7.2" width="8.4" height="1.3" fill="#9446ee"/><rect x="2.8" y="9.3" width="8.4" height="1.7" fill="#9446ee"/></svg></div><div class="a" style="left:937.1px;top:859.30px;height:14px;line-height:14px;font-size:11px;color:#3b3f4a;font-weight:400;transform:scaleX(0.8747);transform-origin:left center;">VANAUVE LOGISTICS B.V.</div><div class="a" style="right:555.7px;top:859.30px;height:14px;line-height:14px;font-size:11px;color:#3b3f4a;font-weight:400;text-align:right;transform:scaleX(0.9082);transform-origin:right center;">58,00</div><div class="a" style="right:388.9000000000001px;top:859.30px;height:14px;line-height:14px;font-size:11px;color:#3b3f4a;font-weight:400;text-align:right;transform:scaleX(1.0134);transform-origin:right center;">0</div><div class="a" style="left:1552.4px;top:859.30px;height:14px;line-height:14px;font-size:11px;color:#3b3f4a;font-weight:400;transform:scaleX(0.8608);transform-origin:left center;">FICHE 488 SERVIETTES HYGIENIQUE NIGHT</div><div class="a" style="left:263px;top:883px;width:1613px;height:31px;background:#ffffff;"></div><div class="a" style="left:263px;top:914px;width:1613px;height:1px;background:#e5e7eb;"></div><div class="a" style="left:275px;top:891.6px"><svg width="13" height="13" viewBox="0 0 13 13"><rect width="13" height="13" rx="2.5" fill="#5d57e6"/><path d="M3 6.8 L5.5 9 L10.2 4.3" fill="none" stroke="#eceaff" stroke-width="1"/></svg></div><div class="a" style="left:309.6px;top:891.10px;height:14px;line-height:14px;font-size:11px;color:#8b1e2b;font-weight:400;transform:scaleX(0.9371);transform-origin:left center;">359553</div><div class="a" style="left:378.5px;top:893.1px"><svg width="12" height="10" viewBox="0 0 12 10"><rect x="0" y="0" width="1.3" height="10" fill="#8e2b34"/><rect x="2" y="0" width="4.5" height="10" fill="#b35f68"/><rect x="7.2" y="0" width="1.3" height="10" fill="#8e2b34"/><rect x="9.6" y="0" width="1.5" height="10" fill="#8e2b34"/></svg></div><div class="a" style="left:411.3px;top:886px;width:12.5px;height:23.5px;background:#f5a30a;border-radius:3px;"></div><div class="a" style="left:417.6px;top:892.10px;height:12px;line-height:12px;font-size:10px;color:#3a2a05;font-weight:400;transform:translateX(-50%);">?</div><div class="a" style="left:428px;top:892.6px"><svg width="12" height="10" viewBox="0 0 12 10"><path d="M0.8 5.4 L4 8.5 L11 1.2" fill="none" stroke="#6a62d6" stroke-width="1.2"/></svg></div><div class="a" style="left:445px;top:891.6px"><svg width="11" height="12" viewBox="0 0 11 12"><path d="M5.2 2.2 A4.2 4.2 0 1 1 1.1 6.8" fill="none" stroke="#a6a1ea" stroke-width="1.1"/><path d="M2.8 2.2 L5.6 0.4 L5.6 4Z" fill="#a6a1ea"/></svg></div><div class="a" style="left:602.5px;top:893.10px;height:11px;line-height:11px;font-size:9px;color:#1f8a7a;font-weight:400;transform:scaleX(0.9430);transform-origin:left center;">#6704</div><div class="a" style="left:628.8px;top:891.10px;height:14px;line-height:14px;font-size:11px;color:#a0561f;font-weight:400;transform:scaleX(0.9588);transform-origin:left center;">Maandverbanden</div><div class="a" style="left:920.8px;top:892.3px"><svg width="14" height="11" viewBox="0 0 14 11"><path d="M0.3 3.2 Q0.3 2.2 1.3 1.8 L6 0.3 Q7 0 8 0.3 L12.7 1.8 Q13.7 2.2 13.7 3.2 V10.2 Q13.7 11 12.9 11 H1.1 Q0.3 11 0.3 10.2Z" fill="#9446ee"/><rect x="2.8" y="4.6" width="8.4" height="6.4" fill="#f1e8fd"/><rect x="2.8" y="5.2" width="8.4" height="1.3" fill="#9446ee"/><rect x="2.8" y="7.2" width="8.4" height="1.3" fill="#9446ee"/><rect x="2.8" y="9.3" width="8.4" height="1.7" fill="#9446ee"/></svg></div><div class="a" style="left:937.1px;top:891.10px;height:14px;line-height:14px;font-size:11px;color:#3b3f4a;font-weight:400;transform:scaleX(0.8747);transform-origin:left center;">VANAUVE LOGISTICS B.V.</div><div class="a" style="right:555.7px;top:891.10px;height:14px;line-height:14px;font-size:11px;color:#3b3f4a;font-weight:400;text-align:right;transform:scaleX(0.9082);transform-origin:right center;">52,00</div><div class="a" style="right:388.9000000000001px;top:891.10px;height:14px;line-height:14px;font-size:11px;color:#3b3f4a;font-weight:400;text-align:right;transform:scaleX(1.0134);transform-origin:right center;">0</div><div class="a" style="left:1552.4px;top:891.10px;height:14px;line-height:14px;font-size:11px;color:#3b3f4a;font-weight:400;transform:scaleX(0.8678);transform-origin:left center;">FICHE 488 SERVIETTES HYGIENIQUE NORMAL</div><div class="a" style="left:263px;top:915px;width:1613px;height:31px;background:#f7f8fb;"></div><div class="a" style="left:263px;top:946px;width:1613px;height:1px;background:#e5e7eb;"></div><div class="a" style="left:275px;top:923.4px"><svg width="13" height="13" viewBox="0 0 13 13"><rect width="13" height="13" rx="2.5" fill="#5d57e6"/><path d="M3 6.8 L5.5 9 L10.2 4.3" fill="none" stroke="#eceaff" stroke-width="1"/></svg></div><div class="a" style="left:309.6px;top:922.90px;height:14px;line-height:14px;font-size:11px;color:#8b1e2b;font-weight:400;transform:scaleX(0.9371);transform-origin:left center;">359554</div><div class="a" style="left:378.5px;top:924.9px"><svg width="12" height="10" viewBox="0 0 12 10"><rect x="0" y="0" width="1.3" height="10" fill="#8e2b34"/><rect x="2" y="0" width="4.5" height="10" fill="#b35f68"/><rect x="7.2" y="0" width="1.3" height="10" fill="#8e2b34"/><rect x="9.6" y="0" width="1.5" height="10" fill="#8e2b34"/></svg></div><div class="a" style="left:411.3px;top:918px;width:12.5px;height:23.5px;background:#f5a30a;border-radius:3px;"></div><div class="a" style="left:417.6px;top:923.90px;height:12px;line-height:12px;font-size:10px;color:#3a2a05;font-weight:400;transform:translateX(-50%);">?</div><div class="a" style="left:428px;top:924.4px"><svg width="12" height="10" viewBox="0 0 12 10"><path d="M0.8 5.4 L4 8.5 L11 1.2" fill="none" stroke="#6a62d6" stroke-width="1.2"/></svg></div><div class="a" style="left:445px;top:923.4px"><svg width="11" height="12" viewBox="0 0 11 12"><path d="M5.2 2.2 A4.2 4.2 0 1 1 1.1 6.8" fill="none" stroke="#a6a1ea" stroke-width="1.1"/><path d="M2.8 2.2 L5.6 0.4 L5.6 4Z" fill="#a6a1ea"/></svg></div><div class="a" style="left:602.5px;top:924.90px;height:11px;line-height:11px;font-size:9px;color:#1f8a7a;font-weight:400;transform:scaleX(0.9430);transform-origin:left center;">#6704</div><div class="a" style="left:628.8px;top:922.90px;height:14px;line-height:14px;font-size:11px;color:#a0561f;font-weight:400;transform:scaleX(0.9588);transform-origin:left center;">Maandverbanden</div><div class="a" style="left:920.8px;top:924.1px"><svg width="14" height="11" viewBox="0 0 14 11"><path d="M0.3 3.2 Q0.3 2.2 1.3 1.8 L6 0.3 Q7 0 8 0.3 L12.7 1.8 Q13.7 2.2 13.7 3.2 V10.2 Q13.7 11 12.9 11 H1.1 Q0.3 11 0.3 10.2Z" fill="#9446ee"/><rect x="2.8" y="4.6" width="8.4" height="6.4" fill="#f1e8fd"/><rect x="2.8" y="5.2" width="8.4" height="1.3" fill="#9446ee"/><rect x="2.8" y="7.2" width="8.4" height="1.3" fill="#9446ee"/><rect x="2.8" y="9.3" width="8.4" height="1.7" fill="#9446ee"/></svg></div><div class="a" style="left:937.1px;top:922.90px;height:14px;line-height:14px;font-size:11px;color:#3b3f4a;font-weight:400;transform:scaleX(0.8747);transform-origin:left center;">VANAUVE LOGISTICS B.V.</div><div class="a" style="right:555.7px;top:922.90px;height:14px;line-height:14px;font-size:11px;color:#3b3f4a;font-weight:400;text-align:right;transform:scaleX(0.9082);transform-origin:right center;">52,00</div><div class="a" style="right:388.9000000000001px;top:922.90px;height:14px;line-height:14px;font-size:11px;color:#3b3f4a;font-weight:400;text-align:right;transform:scaleX(1.0134);transform-origin:right center;">0</div><div class="a" style="left:1552.4px;top:922.90px;height:14px;line-height:14px;font-size:11px;color:#3b3f4a;font-weight:400;transform:scaleX(0.8678);transform-origin:left center;">FICHE 488 SERVIETTES HYGIENIQUE NORMAL</div><div class="a" style="left:263px;top:947px;width:1613px;height:31px;background:#ffffff;"></div><div class="a" style="left:263px;top:978px;width:1613px;height:1px;background:#e5e7eb;"></div><div class="a" style="left:275px;top:955.2px"><svg width="13" height="13" viewBox="0 0 13 13"><rect width="13" height="13" rx="2.5" fill="#5d57e6"/><path d="M3 6.8 L5.5 9 L10.2 4.3" fill="none" stroke="#eceaff" stroke-width="1"/></svg></div><div class="a" style="left:309.6px;top:954.70px;height:14px;line-height:14px;font-size:11px;color:#8b1e2b;font-weight:400;transform:scaleX(0.9371);transform-origin:left center;">359525</div><div class="a" style="left:378.5px;top:956.7px"><svg width="12" height="10" viewBox="0 0 12 10"><rect x="0" y="0" width="1.3" height="10" fill="#8e2b34"/><rect x="2" y="0" width="4.5" height="10" fill="#b35f68"/><rect x="7.2" y="0" width="1.3" height="10" fill="#8e2b34"/><rect x="9.6" y="0" width="1.5" height="10" fill="#8e2b34"/></svg></div><div class="a" style="left:411.3px;top:950px;width:12.5px;height:23.5px;background:#f5a30a;border-radius:3px;"></div><div class="a" style="left:417.6px;top:955.70px;height:12px;line-height:12px;font-size:10px;color:#3a2a05;font-weight:400;transform:translateX(-50%);">?</div><div class="a" style="left:428px;top:956.2px"><svg width="12" height="10" viewBox="0 0 12 10"><path d="M0.8 5.4 L4 8.5 L11 1.2" fill="none" stroke="#6a62d6" stroke-width="1.2"/></svg></div><div class="a" style="left:445px;top:955.2px"><svg width="11" height="12" viewBox="0 0 11 12"><path d="M5.2 2.2 A4.2 4.2 0 1 1 1.1 6.8" fill="none" stroke="#a6a1ea" stroke-width="1.1"/><path d="M2.8 2.2 L5.6 0.4 L5.6 4Z" fill="#a6a1ea"/></svg></div><div class="a" style="left:602.5px;top:956.70px;height:11px;line-height:11px;font-size:9px;color:#1f8a7a;font-weight:400;transform:scaleX(0.9430);transform-origin:left center;">#6704</div><div class="a" style="left:628.8px;top:954.70px;height:14px;line-height:14px;font-size:11px;color:#a0561f;font-weight:400;transform:scaleX(0.9588);transform-origin:left center;">Maandverbanden</div><div class="a" style="left:920.8px;top:955.9px"><svg width="14" height="11" viewBox="0 0 14 11"><path d="M0.3 3.2 Q0.3 2.2 1.3 1.8 L6 0.3 Q7 0 8 0.3 L12.7 1.8 Q13.7 2.2 13.7 3.2 V10.2 Q13.7 11 12.9 11 H1.1 Q0.3 11 0.3 10.2Z" fill="#9446ee"/><rect x="2.8" y="4.6" width="8.4" height="6.4" fill="#f1e8fd"/><rect x="2.8" y="5.2" width="8.4" height="1.3" fill="#9446ee"/><rect x="2.8" y="7.2" width="8.4" height="1.3" fill="#9446ee"/><rect x="2.8" y="9.3" width="8.4" height="1.7" fill="#9446ee"/></svg></div><div class="a" style="left:937.1px;top:954.70px;height:14px;line-height:14px;font-size:11px;color:#3b3f4a;font-weight:400;transform:scaleX(0.8747);transform-origin:left center;">VANAUVE LOGISTICS B.V.</div><div class="a" style="right:555.7px;top:954.70px;height:14px;line-height:14px;font-size:11px;color:#3b3f4a;font-weight:400;text-align:right;transform:scaleX(0.9082);transform-origin:right center;">58,00</div><div class="a" style="right:388.9000000000001px;top:954.70px;height:14px;line-height:14px;font-size:11px;color:#3b3f4a;font-weight:400;text-align:right;transform:scaleX(1.0134);transform-origin:right center;">0</div><div class="a" style="left:1552.4px;top:954.70px;height:14px;line-height:14px;font-size:11px;color:#3b3f4a;font-weight:400;transform:scaleX(0.8608);transform-origin:left center;">FICHE 488 SERVIETTES HYGIENIQUE NIGHT</div><div class="a" style="left:263px;top:979px;width:1613px;height:30px;background:#f7f8fb;"></div><div class="a" style="left:263px;top:1009px;width:1613px;height:1px;background:#e5e7eb;"></div><div class="a" style="left:275px;top:987.0px"><svg width="13" height="13" viewBox="0 0 13 13"><rect width="13" height="13" rx="2.5" fill="#5d57e6"/><path d="M3 6.8 L5.5 9 L10.2 4.3" fill="none" stroke="#eceaff" stroke-width="1"/></svg></div><div class="a" style="left:309.6px;top:986.50px;height:14px;line-height:14px;font-size:11px;color:#8b1e2b;font-weight:400;transform:scaleX(0.9371);transform-origin:left center;">359555</div><div class="a" style="left:378.5px;top:988.5px"><svg width="12" height="10" viewBox="0 0 12 10"><rect x="0" y="0" width="1.3" height="10" fill="#8e2b34"/><rect x="2" y="0" width="4.5" height="10" fill="#b35f68"/><rect x="7.2" y="0" width="1.3" height="10" fill="#8e2b34"/><rect x="9.6" y="0" width="1.5" height="10" fill="#8e2b34"/></svg></div><div class="a" style="left:411.3px;top:982px;width:12.5px;height:23.5px;background:#f5a30a;border-radius:3px;"></div><div class="a" style="left:417.6px;top:987.50px;height:12px;line-height:12px;font-size:10px;color:#3a2a05;font-weight:400;transform:translateX(-50%);">?</div><div class="a" style="left:428px;top:988.0px"><svg width="12" height="10" viewBox="0 0 12 10"><path d="M0.8 5.4 L4 8.5 L11 1.2" fill="none" stroke="#6a62d6" stroke-width="1.2"/></svg></div><div class="a" style="left:445px;top:987.0px"><svg width="11" height="12" viewBox="0 0 11 12"><path d="M5.2 2.2 A4.2 4.2 0 1 1 1.1 6.8" fill="none" stroke="#a6a1ea" stroke-width="1.1"/><path d="M2.8 2.2 L5.6 0.4 L5.6 4Z" fill="#a6a1ea"/></svg></div><div class="a" style="left:602.5px;top:988.50px;height:11px;line-height:11px;font-size:9px;color:#1f8a7a;font-weight:400;transform:scaleX(0.9430);transform-origin:left center;">#6704</div><div class="a" style="left:628.8px;top:986.50px;height:14px;line-height:14px;font-size:11px;color:#a0561f;font-weight:400;transform:scaleX(0.9588);transform-origin:left center;">Maandverbanden</div><div class="a" style="left:920.8px;top:987.7px"><svg width="14" height="11" viewBox="0 0 14 11"><path d="M0.3 3.2 Q0.3 2.2 1.3 1.8 L6 0.3 Q7 0 8 0.3 L12.7 1.8 Q13.7 2.2 13.7 3.2 V10.2 Q13.7 11 12.9 11 H1.1 Q0.3 11 0.3 10.2Z" fill="#9446ee"/><rect x="2.8" y="4.6" width="8.4" height="6.4" fill="#f1e8fd"/><rect x="2.8" y="5.2" width="8.4" height="1.3" fill="#9446ee"/><rect x="2.8" y="7.2" width="8.4" height="1.3" fill="#9446ee"/><rect x="2.8" y="9.3" width="8.4" height="1.7" fill="#9446ee"/></svg></div><div class="a" style="left:937.1px;top:986.50px;height:14px;line-height:14px;font-size:11px;color:#3b3f4a;font-weight:400;transform:scaleX(0.8747);transform-origin:left center;">VANAUVE LOGISTICS B.V.</div><div class="a" style="right:555.7px;top:986.50px;height:14px;line-height:14px;font-size:11px;color:#3b3f4a;font-weight:400;text-align:right;transform:scaleX(0.9082);transform-origin:right center;">52,00</div><div class="a" style="right:388.9000000000001px;top:986.50px;height:14px;line-height:14px;font-size:11px;color:#3b3f4a;font-weight:400;text-align:right;transform:scaleX(1.0134);transform-origin:right center;">0</div><div class="a" style="left:1552.4px;top:986.50px;height:14px;line-height:14px;font-size:11px;color:#3b3f4a;font-weight:400;transform:scaleX(0.8678);transform-origin:left center;">FICHE 488 SERVIETTES HYGIENIQUE NORMAL</div><div class="a" style="left:263px;top:1010px;width:1613px;height:31px;background:#ffffff;"></div><div class="a" style="left:263px;top:1041px;width:1613px;height:1px;background:#e5e7eb;"></div><div class="a" style="left:275px;top:1018.8px"><svg width="13" height="13" viewBox="0 0 13 13"><rect width="13" height="13" rx="2.5" fill="#5d57e6"/><path d="M3 6.8 L5.5 9 L10.2 4.3" fill="none" stroke="#eceaff" stroke-width="1"/></svg></div><div class="a" style="left:309.6px;top:1018.30px;height:14px;line-height:14px;font-size:11px;color:#8b1e2b;font-weight:400;transform:scaleX(0.9371);transform-origin:left center;">359527</div><div class="a" style="left:378.5px;top:1020.3px"><svg width="12" height="10" viewBox="0 0 12 10"><rect x="0" y="0" width="1.3" height="10" fill="#8e2b34"/><rect x="2" y="0" width="4.5" height="10" fill="#b35f68"/><rect x="7.2" y="0" width="1.3" height="10" fill="#8e2b34"/><rect x="9.6" y="0" width="1.5" height="10" fill="#8e2b34"/></svg></div><div class="a" style="left:411.3px;top:1013px;width:12.5px;height:23.5px;background:#f5a30a;border-radius:3px;"></div><div class="a" style="left:417.6px;top:1019.30px;height:12px;line-height:12px;font-size:10px;color:#3a2a05;font-weight:400;transform:translateX(-50%);">?</div><div class="a" style="left:428px;top:1019.8px"><svg width="12" height="10" viewBox="0 0 12 10"><path d="M0.8 5.4 L4 8.5 L11 1.2" fill="none" stroke="#6a62d6" stroke-width="1.2"/></svg></div><div class="a" style="left:445px;top:1018.8px"><svg width="11" height="12" viewBox="0 0 11 12"><path d="M5.2 2.2 A4.2 4.2 0 1 1 1.1 6.8" fill="none" stroke="#a6a1ea" stroke-width="1.1"/><path d="M2.8 2.2 L5.6 0.4 L5.6 4Z" fill="#a6a1ea"/></svg></div><div class="a" style="left:602.5px;top:1020.30px;height:11px;line-height:11px;font-size:9px;color:#1f8a7a;font-weight:400;transform:scaleX(0.9430);transform-origin:left center;">#6704</div><div class="a" style="left:628.8px;top:1018.30px;height:14px;line-height:14px;font-size:11px;color:#a0561f;font-weight:400;transform:scaleX(0.9588);transform-origin:left center;">Maandverbanden</div><div class="a" style="left:920.8px;top:1019.5px"><svg width="14" height="11" viewBox="0 0 14 11"><path d="M0.3 3.2 Q0.3 2.2 1.3 1.8 L6 0.3 Q7 0 8 0.3 L12.7 1.8 Q13.7 2.2 13.7 3.2 V10.2 Q13.7 11 12.9 11 H1.1 Q0.3 11 0.3 10.2Z" fill="#9446ee"/><rect x="2.8" y="4.6" width="8.4" height="6.4" fill="#f1e8fd"/><rect x="2.8" y="5.2" width="8.4" height="1.3" fill="#9446ee"/><rect x="2.8" y="7.2" width="8.4" height="1.3" fill="#9446ee"/><rect x="2.8" y="9.3" width="8.4" height="1.7" fill="#9446ee"/></svg></div><div class="a" style="left:937.1px;top:1018.30px;height:14px;line-height:14px;font-size:11px;color:#3b3f4a;font-weight:400;transform:scaleX(0.8747);transform-origin:left center;">VANAUVE LOGISTICS B.V.</div><div class="a" style="right:555.7px;top:1018.30px;height:14px;line-height:14px;font-size:11px;color:#3b3f4a;font-weight:400;text-align:right;transform:scaleX(0.9082);transform-origin:right center;">58,00</div><div class="a" style="right:388.9000000000001px;top:1018.30px;height:14px;line-height:14px;font-size:11px;color:#3b3f4a;font-weight:400;text-align:right;transform:scaleX(1.0134);transform-origin:right center;">0</div><div class="a" style="left:1552.4px;top:1018.30px;height:14px;line-height:14px;font-size:11px;color:#3b3f4a;font-weight:400;transform:scaleX(0.8608);transform-origin:left center;">FICHE 488 SERVIETTES HYGIENIQUE NIGHT</div><div class="a" style="left:443.2px;top:606.4px;width:129px;height:73.5px;background:#4b5565;border-radius:5px;"></div><div class="a" style="left:451.8px;top:610.20px;height:14px;line-height:14px;font-size:11px;color:#ffffff;font-weight:400;transform:scaleX(0.9815);transform-origin:left center;-webkit-text-stroke:0.25px #fff;">Hiermee wordt</div><div class="a" style="left:451.8px;top:622.92px;height:14px;line-height:14px;font-size:11px;color:#ffffff;font-weight:400;transform:scaleX(0.9786);transform-origin:left center;-webkit-text-stroke:0.25px #fff;">bevestigd dat de</div><div class="a" style="left:451.8px;top:635.64px;height:14px;line-height:14px;font-size:11px;color:#ffffff;font-weight:400;transform:scaleX(0.9664);transform-origin:left center;-webkit-text-stroke:0.25px #fff;">voorraad is ontvangen</div><div class="a" style="left:451.8px;top:648.36px;height:14px;line-height:14px;font-size:11px;color:#ffffff;font-weight:400;transform:scaleX(0.9811);transform-origin:left center;-webkit-text-stroke:0.25px #fff;">zonder ontbrekende</div><div class="a" style="left:451.8px;top:661.08px;height:14px;line-height:14px;font-size:11px;color:#ffffff;font-weight:400;transform:scaleX(0.9614);transform-origin:left center;-webkit-text-stroke:0.25px #fff;">pakketten.</div><svg class="a" style="left:439px;top:637px" width="5" height="8"><path d="M5 0 L0.5 4 L5 8Z" fill="#4b5565"/></svg><svg class="a" style="left:422px;top:643px" width="12" height="16" viewBox="0 0 12 16"><path d="M3.5 1.5 Q3.5 0.5 4.5 0.5 Q5.5 0.5 5.5 1.5 V6 Q6.5 5.5 7.3 6.2 Q8.3 6 8.8 6.8 Q9.8 6.6 10.5 7.5 V11.5 Q10.5 13.5 9 15 H4.5 Q3.5 14 2 11.5 L0.8 9 Q0.5 8 1.5 7.8 Q2.3 7.8 3.5 9.5Z" fill="#fff" stroke="#111" stroke-width="0.8"/></svg></body></html>
